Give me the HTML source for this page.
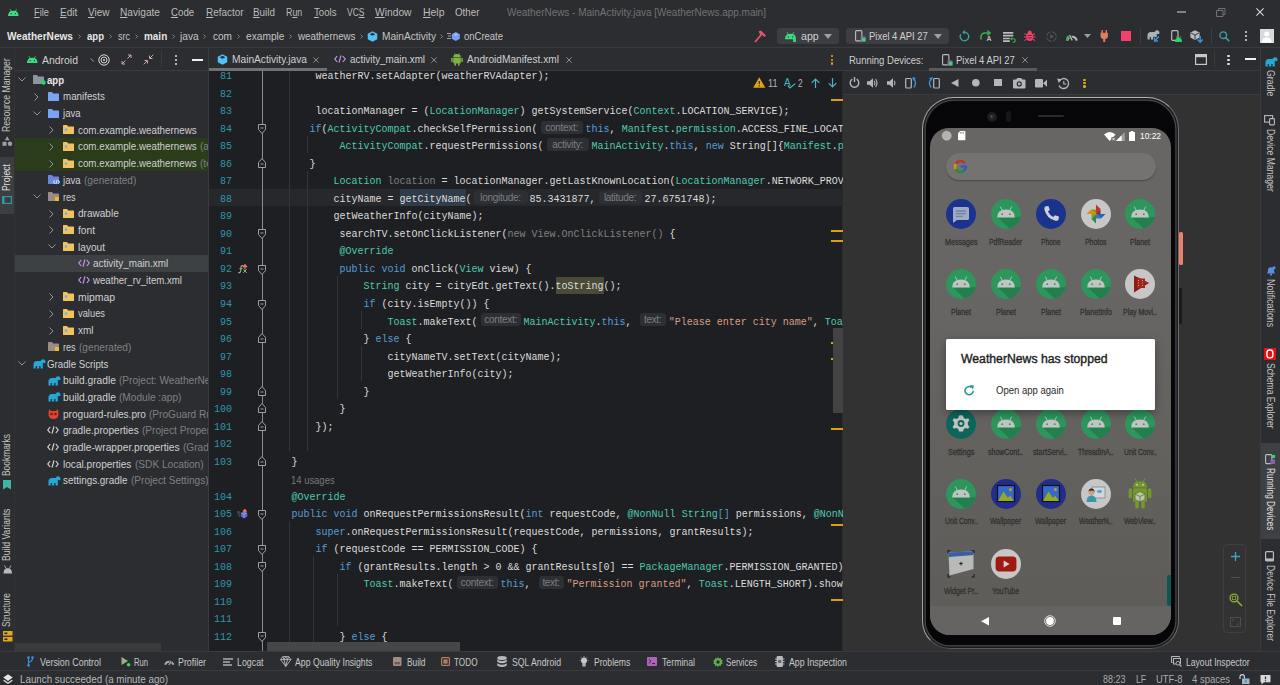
<!DOCTYPE html>
<html lang="en"><head><meta charset="utf-8"><title>WeatherNews - MainActivity.java</title>
<style>
html,body{margin:0;padding:0;background:#2b2d30;}
body{width:1280px;height:685px;overflow:hidden;font-family:"Liberation Sans",sans-serif;}
#root{position:relative;width:1280px;height:685px;overflow:hidden;background:#2b2d30;}
.t{position:absolute;height:16px;line-height:16px;white-space:nowrap;transform-origin:0 50%;}
.vt{position:absolute;white-space:nowrap;font-size:10px;line-height:14px;height:14px;color:#bbb;transform-origin:0 0;}
.cl{position:absolute;left:267.5px;height:17.5px;line-height:17.5px;white-space:pre;font-family:"Liberation Mono",monospace;font-size:10px;color:#dcdcdc;}
.ln{position:absolute;left:209px;width:23px;text-align:right;height:17.5px;line-height:17.5px;font-family:"Liberation Mono",monospace;font-size:10px;color:#2b97ac;}
.k{color:#569cd6}.c{color:#4ec9b0}.s{color:#d69d85}.g{color:#808080}.a{color:#4ec9b0}
.h{display:inline-block;vertical-align:top;margin-top:-0.1px;height:13px;line-height:13.4px;background:#2d2f33;border-radius:3px;color:#7a7e85;font-family:"Liberation Sans",sans-serif;font-size:10px;text-align:center;overflow:hidden;letter-spacing:-0.3px}
svg{position:absolute;overflow:visible}

</style></head>
<body>
<div id="root">
<div style="position:absolute;left:0px;top:0px;width:1280px;height:48px;background:#2b2d30;"></div>
<div style="position:absolute;left:0px;top:47px;width:1280px;height:1px;background:#393b40;"></div>
<div style="position:absolute;left:0px;top:48px;width:15px;height:603px;background:#2b2d30;"></div>
<div style="position:absolute;left:14px;top:48px;width:1px;height:603px;background:#313336;"></div>
<div style="position:absolute;left:15px;top:48px;width:194px;height:603px;background:#2b2d30;"></div>
<div style="position:absolute;left:15px;top:70px;width:193px;height:1px;background:#393b40;"></div>
<div style="position:absolute;left:208px;top:48px;width:1px;height:603px;background:#393b40;"></div>
<div style="position:absolute;left:209px;top:48px;width:634px;height:23px;background:#2b2d30;"></div>
<div style="position:absolute;left:209px;top:70px;width:634px;height:1px;background:#393b40;"></div>
<div style="position:absolute;left:209px;top:71px;width:633.2px;height:580px;background:#1e1f22;"></div>
<div style="position:absolute;left:842.2px;top:48px;width:418px;height:603px;background:#2b2d30;"></div>
<div style="position:absolute;left:843.3px;top:95px;width:417px;height:556px;background:#323232;"></div>
<div style="position:absolute;left:843.3px;top:94px;width:417px;height:1px;background:#393b40;"></div>
<div style="position:absolute;left:843.3px;top:70px;width:417px;height:1px;background:#393b40;"></div>
<div style="position:absolute;left:1260px;top:48px;width:20px;height:603px;background:#2b2d30;"></div>
<div style="position:absolute;left:1260px;top:48px;width:1px;height:603px;background:#393b40;"></div>
<div style="position:absolute;left:0px;top:651px;width:1280px;height:34px;background:#2b2d30;"></div>
<div style="position:absolute;left:0px;top:651px;width:1280px;height:1px;background:#393b40;"></div>
<div style="position:absolute;left:0px;top:670px;width:1280px;height:1px;background:#393b40;"></div>
<div style="position:absolute;left:209px;top:71px;width:634px;height:580px;overflow:hidden">
<div style="position:absolute;left:-209px;top:-71px;width:1280px;height:685px">
<div style="position:absolute;left:209px;top:188.5px;width:634px;height:17.3px;background:#26282c;"></div>
<div style="position:absolute;left:399.5px;top:188.5px;width:66px;height:17.3px;background:#303c49;"></div>
<div style="position:absolute;left:555.5px;top:276.6px;width:48.5px;height:17.3px;background:#4a4a36;"></div>
<div style="position:absolute;left:261.5px;top:71px;width:1px;height:580px;background:#8c8c8c;"></div>
<div class="ln" style="top:68.25px">81</div>
<div class="cl" style="top:68.25px">        weatherRV.setAdapter(weatherRVAdapter);</div>
<div class="ln" style="top:85.77px">82</div>
<div class="cl" style="top:85.77px"></div>
<div class="ln" style="top:103.29px">83</div>
<div class="cl" style="top:103.29px">        locationManager = (<span class="c">LocationManager</span>) getSystemService(<span class="c">Context</span>.LOCATION_SERVICE);</div>
<div class="ln" style="top:120.81px">84</div>
<div class="cl" style="top:120.81px">       <span class="k">if</span>(<span class="c">ActivityCompat</span>.checkSelfPermission(<span style="display:inline-block;width:3px"></span><span class="h" style="width:42px">context:</span><span style="display:inline-block;width:3px"></span><span class="k">this</span>, <span class="c">Manifest</span>.<span class="c">permission</span>.ACCESS_FINE_LOCATION) != PackageManager</div>
<div class="ln" style="top:138.33px">85</div>
<div class="cl" style="top:138.33px">            <span class="c">ActivityCompat</span>.requestPermissions(<span style="display:inline-block;width:3px"></span><span class="h" style="width:42px">activity:</span><span style="display:inline-block;width:3px"></span><span class="c">MainActivity</span>.<span class="k">this</span>, <span class="k">new</span> String[]{<span class="c">Manifest</span>.<span class="c">permission</span>.ACCESS_FINE</div>
<div class="ln" style="top:155.85px">86</div>
<div class="cl" style="top:155.85px">       }</div>
<div class="ln" style="top:173.37px">87</div>
<div class="cl" style="top:173.37px">           <span class="c">Location</span> <span class="g">location</span> = locationManager.getLastKnownLocation(<span class="c">LocationManager</span>.NETWORK_PROVIDER);</div>
<div class="ln" style="top:190.89px">88</div>
<div class="cl" style="top:190.89px">           cityName = getCityName(<span style="display:inline-block;width:2px"></span><span class="h" style="width:54px">longitude:</span><span style="display:inline-block;width:2px"></span>85.3431877,<span style="display:inline-block;width:3px"></span><span class="h" style="width:43px">latitude:</span><span style="display:inline-block;width:3px"></span>27.6751748);</div>
<div class="ln" style="top:208.41px">89</div>
<div class="cl" style="top:208.41px">           getWeatherInfo(cityName);</div>
<div class="ln" style="top:225.93px">90</div>
<div class="cl" style="top:225.93px">            searchTV.setOnClickListener(<span class="g">new View.OnClickListener()</span> {</div>
<div class="ln" style="top:243.45px">91</div>
<div class="cl" style="top:243.45px">            <span class="c">@Override</span></div>
<div class="ln" style="top:260.97px">92</div>
<div class="cl" style="top:260.97px">            <span class="k">public void</span> onClick(<span class="c">View</span> view) {</div>
<div class="ln" style="top:278.49px">93</div>
<div class="cl" style="top:278.49px">                <span class="c">String</span> city = cityEdt.getText().toString();</div>
<div class="ln" style="top:296.01px">94</div>
<div class="cl" style="top:296.01px">                <span class="k">if</span> (city.isEmpty()) {</div>
<div class="ln" style="top:313.53px">95</div>
<div class="cl" style="top:313.53px">                    <span class="c">Toast</span>.makeText(<span style="display:inline-block;width:3px"></span><span class="h" style="width:40px">context:</span><span style="display:inline-block;width:3px"></span><span class="c">MainActivity</span>.<span class="k">this</span>, <span style="display:inline-block;width:2px"></span><span class="h" style="width:26px">text:</span><span style="display:inline-block;width:3px"></span><span class="s">"Please enter city name"</span>, <span class="c">Toast</span>.LENGTH_SHORT).show();</div>
<div class="ln" style="top:331.05px">96</div>
<div class="cl" style="top:331.05px">                } <span class="k">else</span> {</div>
<div class="ln" style="top:348.57px">97</div>
<div class="cl" style="top:348.57px">                    cityNameTV.setText(cityName);</div>
<div class="ln" style="top:366.09px">98</div>
<div class="cl" style="top:366.09px">                    getWeatherInfo(city);</div>
<div class="ln" style="top:383.61px">99</div>
<div class="cl" style="top:383.61px">                }</div>
<div class="ln" style="top:401.13px">100</div>
<div class="cl" style="top:401.13px">            }</div>
<div class="ln" style="top:418.65px">101</div>
<div class="cl" style="top:418.65px">        });</div>
<div class="ln" style="top:436.17px">102</div>
<div class="cl" style="top:436.17px"></div>
<div class="ln" style="top:453.69px">103</div>
<div class="cl" style="top:453.69px">    }</div>
<div class="t" style="left:291px;top:472.01px;font-size:10.5px;color:#787878;transform:scaleX(.9)">14 usages</div>
<div class="ln" style="top:488.73px">104</div>
<div class="cl" style="top:488.73px">    <span class="c">@Override</span></div>
<div class="ln" style="top:506.25px">105</div>
<div class="cl" style="top:506.25px">    <span class="k">public void</span> onRequestPermissionsResult(<span class="k">int</span> requestCode, <span class="c">@NonNull</span> <span class="c">String</span><span class="k">[]</span> permissions, <span class="c">@NonNull</span> <span class="k">int[]</span> grantResults) {</div>
<div class="ln" style="top:523.77px">106</div>
<div class="cl" style="top:523.77px">        <span class="k">super</span>.onRequestPermissionsResult(requestCode, permissions, grantResults);</div>
<div class="ln" style="top:541.29px">107</div>
<div class="cl" style="top:541.29px">        <span class="k">if</span> (requestCode == PERMISSION_CODE) {</div>
<div class="ln" style="top:558.81px">108</div>
<div class="cl" style="top:558.81px">            <span class="k">if</span> (grantResults.length &gt; 0 &amp;&amp; grantResults[0] == <span class="c">PackageManager</span>.PERMISSION_GRANTED) {</div>
<div class="ln" style="top:576.33px">109</div>
<div class="cl" style="top:576.33px">                <span class="c">Toast</span>.makeText(<span style="display:inline-block;width:3px"></span><span class="h" style="width:41px">context:</span><span style="display:inline-block;width:3px"></span><span class="k">this</span>, <span style="display:inline-block;width:2px"></span><span class="h" style="width:25px">text:</span><span style="display:inline-block;width:3px"></span><span class="s">"Permission granted"</span>, <span class="c">Toast</span>.LENGTH_SHORT).show();</div>
<div class="ln" style="top:593.85px">110</div>
<div class="cl" style="top:593.85px"></div>
<div class="ln" style="top:611.37px">111</div>
<div class="cl" style="top:611.37px"></div>
<div class="ln" style="top:628.89px">112</div>
<div class="cl" style="top:628.89px">            } <span class="k">else</span> {</div>
<div style="position:absolute;left:289px;top:65.8px;width:1px;height:385.4px;background:#33353a;"></div>
<div style="position:absolute;left:289px;top:521.4px;width:1px;height:140.2px;background:#33353a;"></div>
<div style="position:absolute;left:307px;top:135.9px;width:1px;height:17.5px;background:#33353a;"></div>
<div style="position:absolute;left:307px;top:171.0px;width:1px;height:280.3px;background:#33353a;"></div>
<div style="position:absolute;left:337px;top:276.1px;width:1px;height:122.6px;background:#33353a;"></div>
<div style="position:absolute;left:361.2px;top:311.1px;width:1px;height:17.5px;background:#33353a;"></div>
<div style="position:absolute;left:361.2px;top:346.2px;width:1px;height:35.0px;background:#33353a;"></div>
<div style="position:absolute;left:313px;top:556.4px;width:1px;height:105.1px;background:#33353a;"></div>
<div style="position:absolute;left:337px;top:573.9px;width:1px;height:52.6px;background:#33353a;"></div>
<svg style="left:258px;top:124.3px" width="8" height="10" viewBox="0 0 8 10"><path d="M0.5 0.5H7.5V5.5L4 9.5L0.5 5.5Z" fill="#1e1f22" stroke="#a0a0a0" stroke-width="1"/><path d="M2.5 4H5.5" stroke="#a0a0a0" stroke-width="1"/></svg>
<svg style="left:258px;top:157.8px" width="8" height="10" viewBox="0 0 8 10"><path d="M0.5 9.5H7.5V4.5L4 0.5L0.5 4.5Z" fill="#1e1f22" stroke="#a0a0a0" stroke-width="1"/><path d="M2.5 6H5.5" stroke="#a0a0a0" stroke-width="1"/></svg>
<svg style="left:258px;top:229.4px" width="8" height="10" viewBox="0 0 8 10"><path d="M0.5 0.5H7.5V5.5L4 9.5L0.5 5.5Z" fill="#1e1f22" stroke="#a0a0a0" stroke-width="1"/><path d="M2.5 4H5.5" stroke="#a0a0a0" stroke-width="1"/></svg>
<svg style="left:258px;top:264.5px" width="8" height="10" viewBox="0 0 8 10"><path d="M0.5 0.5H7.5V5.5L4 9.5L0.5 5.5Z" fill="#1e1f22" stroke="#a0a0a0" stroke-width="1"/><path d="M2.5 4H5.5" stroke="#a0a0a0" stroke-width="1"/></svg>
<svg style="left:258px;top:299.5px" width="8" height="10" viewBox="0 0 8 10"><path d="M0.5 0.5H7.5V5.5L4 9.5L0.5 5.5Z" fill="#1e1f22" stroke="#a0a0a0" stroke-width="1"/><path d="M2.5 4H5.5" stroke="#a0a0a0" stroke-width="1"/></svg>
<svg style="left:258px;top:333.0px" width="8" height="10" viewBox="0 0 8 10"><path d="M0.5 9.5H7.5V4.5L4 0.5L0.5 4.5Z" fill="#1e1f22" stroke="#a0a0a0" stroke-width="1"/><path d="M2.5 6H5.5" stroke="#a0a0a0" stroke-width="1"/></svg>
<svg style="left:258px;top:385.5px" width="8" height="10" viewBox="0 0 8 10"><path d="M0.5 9.5H7.5V4.5L4 0.5L0.5 4.5Z" fill="#1e1f22" stroke="#a0a0a0" stroke-width="1"/><path d="M2.5 6H5.5" stroke="#a0a0a0" stroke-width="1"/></svg>
<svg style="left:258px;top:403.0px" width="8" height="10" viewBox="0 0 8 10"><path d="M0.5 9.5H7.5V4.5L4 0.5L0.5 4.5Z" fill="#1e1f22" stroke="#a0a0a0" stroke-width="1"/><path d="M2.5 6H5.5" stroke="#a0a0a0" stroke-width="1"/></svg>
<svg style="left:258px;top:420.6px" width="8" height="10" viewBox="0 0 8 10"><path d="M0.5 9.5H7.5V4.5L4 0.5L0.5 4.5Z" fill="#1e1f22" stroke="#a0a0a0" stroke-width="1"/><path d="M2.5 6H5.5" stroke="#a0a0a0" stroke-width="1"/></svg>
<svg style="left:258px;top:455.6px" width="8" height="10" viewBox="0 0 8 10"><path d="M0.5 9.5H7.5V4.5L4 0.5L0.5 4.5Z" fill="#1e1f22" stroke="#a0a0a0" stroke-width="1"/><path d="M2.5 6H5.5" stroke="#a0a0a0" stroke-width="1"/></svg>
<svg style="left:258px;top:509.7px" width="8" height="10" viewBox="0 0 8 10"><path d="M0.5 0.5H7.5V5.5L4 9.5L0.5 5.5Z" fill="#1e1f22" stroke="#a0a0a0" stroke-width="1"/><path d="M2.5 4H5.5" stroke="#a0a0a0" stroke-width="1"/></svg>
<svg style="left:258px;top:544.8px" width="8" height="10" viewBox="0 0 8 10"><path d="M0.5 0.5H7.5V5.5L4 9.5L0.5 5.5Z" fill="#1e1f22" stroke="#a0a0a0" stroke-width="1"/><path d="M2.5 4H5.5" stroke="#a0a0a0" stroke-width="1"/></svg>
<svg style="left:258px;top:562.3px" width="8" height="10" viewBox="0 0 8 10"><path d="M0.5 0.5H7.5V5.5L4 9.5L0.5 5.5Z" fill="#1e1f22" stroke="#a0a0a0" stroke-width="1"/><path d="M2.5 4H5.5" stroke="#a0a0a0" stroke-width="1"/></svg>
<svg style="left:258px;top:632.4px" width="8" height="10" viewBox="0 0 8 10"><path d="M0.5 0.5H7.5V5.5L4 9.5L0.5 5.5Z" fill="#1e1f22" stroke="#a0a0a0" stroke-width="1"/><path d="M2.5 4H5.5" stroke="#a0a0a0" stroke-width="1"/></svg>
<svg style="left:238px;top:264.1px" width="10" height="10" viewBox="0 0 10 10"><path d="M0.3 8.6Q2.6 9 2.8 6.5L3 3.2Q3.2 1.2 5 1.5" fill="none" stroke="#8fb88a" stroke-width="1.1"/><path d="M1.4 4.6H4.4" stroke="#8fb88a" stroke-width="1"/><path d="M5.2 8.8L8.6 5.4M5.4 5.6L8.6 8.8" stroke="#7fc878" stroke-width="1"/><path d="M6.9 5.6V1.2M4.8 3.2L6.9 0.8L9 3.2" fill="none" stroke="#ee7a68" stroke-width="1.3"/></svg>
<svg style="left:237px;top:509.1px" width="11" height="10" viewBox="0 0 11 10"><path d="M0 3H2.8M0.8 5H2.8M1.6 7H2.8" stroke="#5a7a9a" stroke-width=".9"/><path d="M7 2.2L10.3 4V7.6L7 9.4L3.8 7.6V4Z" fill="#5a66dc"/><path d="M7 5.2L9.6 4M7 5.2L4.4 4M7 5.2V8.6" stroke="#7fb0d8" stroke-width=".8"/><path d="M7.8 5V1M6 2.6L7.8 0.6L9.6 2.6" fill="none" stroke="#ee7a68" stroke-width="1.3"/></svg>
<div style="position:absolute;left:267px;top:642px;width:192.5px;height:9px;background:#454749;"></div>
<div style="position:absolute;left:831px;top:99px;width:12px;height:2px;background:#d9a016;"></div>
<div style="position:absolute;left:831px;top:230px;width:12px;height:2px;background:#d9a016;"></div>
<div style="position:absolute;left:831px;top:239.5px;width:12px;height:2px;background:#d9a016;"></div>
<div style="position:absolute;left:831px;top:428.4px;width:12px;height:2px;background:#d9a016;"></div>
<div style="position:absolute;left:831px;top:523.5px;width:12px;height:2px;background:#d9a016;"></div>
<div style="position:absolute;left:831px;top:599.4px;width:12px;height:2px;background:#d9a016;"></div>
<div style="position:absolute;left:830.7px;top:342px;width:3px;height:2px;background:#d9a016;"></div>
<div style="position:absolute;left:830.7px;top:358px;width:3px;height:2px;background:#d9a016;"></div>
<div style="position:absolute;left:833.3px;top:328.4px;width:9.7px;height:84.2px;background:#434343;"></div>
</div></div>
<div style="position:absolute;left:15px;top:71px;width:193px;height:580px;overflow:hidden">
<div style="position:absolute;left:-15px;top:-71px;width:1280px;height:685px">
<div style="position:absolute;left:15px;top:138.0px;width:193px;height:33.4px;background:#2a3c1a;"></div>
<div style="position:absolute;left:15px;top:254.9px;width:193px;height:16.7px;background:#3e4144;"></div>
<svg style="left:17.5px;top:77.1px" width="8" height="5" viewBox="0 0 8 5"><path d="M0.5 0.5L4 4L7.5 0.5" fill="none" stroke="#9da0a3" stroke-width="0.9"/></svg>
<svg style="left:33px;top:75.1px" width="11" height="9" viewBox="0 0 11 9"><path d="M0 0.6Q0 0 .6 0H4L5.2 1.4H10.4Q11 1.4 11 2V8.4Q11 9 10.4 9H.6Q0 9 0 8.4Z" fill="#8a979f"/></svg>
<svg style="left:40.5px;top:80.1px" width="5" height="5"><circle cx="2.5" cy="2.5" r="2.3" fill="#2fd16a"/></svg>
<div class="t" style="left:47.4px;top:71.6px;font-size:11px;color:#e8e8e8;font-weight:bold;transform:scaleX(0.869);">app</div>
<svg style="left:34px;top:92.8px" width="5" height="8" viewBox="0 0 5 8"><path d="M0.5 0.5L4 4L0.5 7.5" fill="none" stroke="#9da0a3" stroke-width="0.9"/></svg>
<svg style="left:48px;top:91.8px" width="11" height="9" viewBox="0 0 11 9"><path d="M0 0.6Q0 0 .6 0H4L5.2 1.4H10.4Q11 1.4 11 2V8.4Q11 9 10.4 9H.6Q0 9 0 8.4Z" fill="#7aa2f7"/></svg>
<div class="t" style="left:62.9px;top:88.3px;font-size:11px;color:#d0d0d0;transform:scaleX(0.888);">manifests</div>
<svg style="left:32.5px;top:110.5px" width="8" height="5" viewBox="0 0 8 5"><path d="M0.5 0.5L4 4L7.5 0.5" fill="none" stroke="#9da0a3" stroke-width="0.9"/></svg>
<svg style="left:48px;top:108.5px" width="11" height="9" viewBox="0 0 11 9"><path d="M0 0.6Q0 0 .6 0H4L5.2 1.4H10.4Q11 1.4 11 2V8.4Q11 9 10.4 9H.6Q0 9 0 8.4Z" fill="#7aa2f7"/></svg>
<div class="t" style="left:62.9px;top:105.0px;font-size:11px;color:#d0d0d0;transform:scaleX(0.872);">java</div>
<svg style="left:49px;top:126.2px" width="5" height="8" viewBox="0 0 5 8"><path d="M0.5 0.5L4 4L0.5 7.5" fill="none" stroke="#9da0a3" stroke-width="0.9"/></svg>
<svg style="left:63.3px;top:125.2px" width="11" height="9" viewBox="0 0 11 9"><path d="M0 0.6Q0 0 .6 0H4L5.2 1.4H10.4Q11 1.4 11 2V8.4Q11 9 10.4 9H.6Q0 9 0 8.4Z" fill="#f2c25f"/><circle cx="3" cy="4.6" r="1.3" fill="#5fb4e8"/></svg>
<div class="t" style="left:77.8px;top:121.7px;font-size:11px;color:#d0d0d0;transform:scaleX(0.890);">com.example.weathernews</div>
<svg style="left:49px;top:142.9px" width="5" height="8" viewBox="0 0 5 8"><path d="M0.5 0.5L4 4L0.5 7.5" fill="none" stroke="#9da0a3" stroke-width="0.9"/></svg>
<svg style="left:63.3px;top:141.9px" width="11" height="9" viewBox="0 0 11 9"><path d="M0 0.6Q0 0 .6 0H4L5.2 1.4H10.4Q11 1.4 11 2V8.4Q11 9 10.4 9H.6Q0 9 0 8.4Z" fill="#f2c25f"/><circle cx="3" cy="4.6" r="1.3" fill="#5fb4e8"/></svg>
<div class="t" style="left:77.8px;top:138.4px;font-size:11px;color:#d0d0d0;transform:scaleX(0.890);">com.example.weathernews</div>
<div class="t" style="left:199.59999999999997px;top:138.4px;font-size:11px;color:#7f8183;transform:scaleX(0.920);">(androidTest)</div>
<svg style="left:49px;top:159.6px" width="5" height="8" viewBox="0 0 5 8"><path d="M0.5 0.5L4 4L0.5 7.5" fill="none" stroke="#9da0a3" stroke-width="0.9"/></svg>
<svg style="left:63.3px;top:158.6px" width="11" height="9" viewBox="0 0 11 9"><path d="M0 0.6Q0 0 .6 0H4L5.2 1.4H10.4Q11 1.4 11 2V8.4Q11 9 10.4 9H.6Q0 9 0 8.4Z" fill="#f2c25f"/><circle cx="3" cy="4.6" r="1.3" fill="#5fb4e8"/></svg>
<div class="t" style="left:77.8px;top:155.1px;font-size:11px;color:#d0d0d0;transform:scaleX(0.890);">com.example.weathernews</div>
<div class="t" style="left:199.59999999999997px;top:155.1px;font-size:11px;color:#7f8183;transform:scaleX(0.920);">(test)</div>
<svg style="left:48px;top:175.3px" width="11" height="9" viewBox="0 0 11 9"><path d="M0 0.6Q0 0 .6 0H4L5.2 1.4H10.4Q11 1.4 11 2V8.4Q11 9 10.4 9H.6Q0 9 0 8.4Z" fill="#6f86d8"/></svg>
<svg style="left:53px;top:178.8px" width="7" height="6" viewBox="0 0 12 8"><path d="M3.2 1L0.8 4L3.2 7M8.8 1L11.2 4L8.8 7M7 0.3L5 7.7" fill="none" stroke="#b8e0ff" stroke-width="1.9"/></svg>
<div class="t" style="left:62.9px;top:171.8px;font-size:11px;color:#d0d0d0;transform:scaleX(0.872);">java</div>
<div class="t" style="left:83.7px;top:171.8px;font-size:11px;color:#7f8183;transform:scaleX(0.920);">(generated)</div>
<svg style="left:32.5px;top:194.0px" width="8" height="5" viewBox="0 0 8 5"><path d="M0.5 0.5L4 4L7.5 0.5" fill="none" stroke="#9da0a3" stroke-width="0.9"/></svg>
<svg style="left:48px;top:192.0px" width="11" height="9" viewBox="0 0 11 9"><path d="M0 0.6Q0 0 .6 0H4L5.2 1.4H10.4Q11 1.4 11 2V8.4Q11 9 10.4 9H.6Q0 9 0 8.4Z" fill="#9a8c82"/></svg>
<div style="position:absolute;left:55px;top:197.0px;width:4px;height:4px;background:#f2b632;"></div>
<div class="t" style="left:62.9px;top:188.5px;font-size:11px;color:#d0d0d0;transform:scaleX(0.825);">res</div>
<svg style="left:49px;top:209.7px" width="5" height="8" viewBox="0 0 5 8"><path d="M0.5 0.5L4 4L0.5 7.5" fill="none" stroke="#9da0a3" stroke-width="0.9"/></svg>
<svg style="left:63.3px;top:208.7px" width="11" height="9" viewBox="0 0 11 9"><path d="M0 0.6Q0 0 .6 0H4L5.2 1.4H10.4Q11 1.4 11 2V8.4Q11 9 10.4 9H.6Q0 9 0 8.4Z" fill="#f2c25f"/><circle cx="3" cy="4.6" r="1.3" fill="#5fb4e8"/></svg>
<div class="t" style="left:77.8px;top:205.2px;font-size:11px;color:#d0d0d0;transform:scaleX(0.912);">drawable</div>
<svg style="left:49px;top:226.4px" width="5" height="8" viewBox="0 0 5 8"><path d="M0.5 0.5L4 4L0.5 7.5" fill="none" stroke="#9da0a3" stroke-width="0.9"/></svg>
<svg style="left:63.3px;top:225.4px" width="11" height="9" viewBox="0 0 11 9"><path d="M0 0.6Q0 0 .6 0H4L5.2 1.4H10.4Q11 1.4 11 2V8.4Q11 9 10.4 9H.6Q0 9 0 8.4Z" fill="#f2c25f"/><circle cx="3" cy="4.6" r="1.3" fill="#5fb4e8"/></svg>
<div class="t" style="left:77.8px;top:221.9px;font-size:11px;color:#d0d0d0;transform:scaleX(0.937);">font</div>
<svg style="left:47.5px;top:244.1px" width="8" height="5" viewBox="0 0 8 5"><path d="M0.5 0.5L4 4L7.5 0.5" fill="none" stroke="#9da0a3" stroke-width="0.9"/></svg>
<svg style="left:63.3px;top:242.1px" width="11" height="9" viewBox="0 0 11 9"><path d="M0 0.6Q0 0 .6 0H4L5.2 1.4H10.4Q11 1.4 11 2V8.4Q11 9 10.4 9H.6Q0 9 0 8.4Z" fill="#f2c25f"/><circle cx="3" cy="4.6" r="1.3" fill="#5fb4e8"/></svg>
<div class="t" style="left:77.8px;top:238.6px;font-size:11px;color:#d0d0d0;transform:scaleX(0.920);">layout</div>
<svg style="left:77.5px;top:259.3px" width="12" height="8" viewBox="0 0 12 8"><path d="M3.2 1L0.8 4L3.2 7M8.8 1L11.2 4L8.8 7M7 0.3L5 7.7" fill="none" stroke="#c792ea" stroke-width="1.2"/></svg>
<div class="t" style="left:93px;top:255.3px;font-size:11px;color:#d0d0d0;transform:scaleX(0.898);">activity_main.xml</div>
<svg style="left:77.5px;top:276.0px" width="12" height="8" viewBox="0 0 12 8"><path d="M3.2 1L0.8 4L3.2 7M8.8 1L11.2 4L8.8 7M7 0.3L5 7.7" fill="none" stroke="#c792ea" stroke-width="1.2"/></svg>
<div class="t" style="left:93px;top:272.0px;font-size:11px;color:#d0d0d0;transform:scaleX(0.877);">weather_rv_item.xml</div>
<svg style="left:49px;top:293.2px" width="5" height="8" viewBox="0 0 5 8"><path d="M0.5 0.5L4 4L0.5 7.5" fill="none" stroke="#9da0a3" stroke-width="0.9"/></svg>
<svg style="left:63.3px;top:292.2px" width="11" height="9" viewBox="0 0 11 9"><path d="M0 0.6Q0 0 .6 0H4L5.2 1.4H10.4Q11 1.4 11 2V8.4Q11 9 10.4 9H.6Q0 9 0 8.4Z" fill="#f2c25f"/><circle cx="3" cy="4.6" r="1.3" fill="#5fb4e8"/></svg>
<div class="t" style="left:77.8px;top:288.7px;font-size:11px;color:#d0d0d0;transform:scaleX(0.946);">mipmap</div>
<svg style="left:49px;top:309.9px" width="5" height="8" viewBox="0 0 5 8"><path d="M0.5 0.5L4 4L0.5 7.5" fill="none" stroke="#9da0a3" stroke-width="0.9"/></svg>
<svg style="left:63.3px;top:308.9px" width="11" height="9" viewBox="0 0 11 9"><path d="M0 0.6Q0 0 .6 0H4L5.2 1.4H10.4Q11 1.4 11 2V8.4Q11 9 10.4 9H.6Q0 9 0 8.4Z" fill="#f2c25f"/><circle cx="3" cy="4.6" r="1.3" fill="#5fb4e8"/></svg>
<div class="t" style="left:77.8px;top:305.4px;font-size:11px;color:#d0d0d0;transform:scaleX(0.849);">values</div>
<svg style="left:49px;top:326.6px" width="5" height="8" viewBox="0 0 5 8"><path d="M0.5 0.5L4 4L0.5 7.5" fill="none" stroke="#9da0a3" stroke-width="0.9"/></svg>
<svg style="left:63.3px;top:325.6px" width="11" height="9" viewBox="0 0 11 9"><path d="M0 0.6Q0 0 .6 0H4L5.2 1.4H10.4Q11 1.4 11 2V8.4Q11 9 10.4 9H.6Q0 9 0 8.4Z" fill="#f2c25f"/><circle cx="3" cy="4.6" r="1.3" fill="#5fb4e8"/></svg>
<div class="t" style="left:77.8px;top:322.1px;font-size:11px;color:#d0d0d0;transform:scaleX(0.912);">xml</div>
<svg style="left:48px;top:342.3px" width="11" height="9" viewBox="0 0 11 9"><path d="M0 0.6Q0 0 .6 0H4L5.2 1.4H10.4Q11 1.4 11 2V8.4Q11 9 10.4 9H.6Q0 9 0 8.4Z" fill="#9a8c82"/></svg>
<div style="position:absolute;left:55px;top:347.3px;width:4px;height:4px;background:#f2b632;"></div>
<div class="t" style="left:62.9px;top:338.8px;font-size:11px;color:#d0d0d0;transform:scaleX(0.825);">res</div>
<div class="t" style="left:78.7px;top:338.8px;font-size:11px;color:#7f8183;transform:scaleX(0.920);">(generated)</div>
<svg style="left:17.5px;top:361.0px" width="8" height="5" viewBox="0 0 8 5"><path d="M0.5 0.5L4 4L7.5 0.5" fill="none" stroke="#9da0a3" stroke-width="0.9"/></svg>
<svg style="left:33px;top:359.0px" width="13" height="10" viewBox="0 0 13 10"><path d="M0.5 9.5V5.5Q0.5 2 4 2H7.5Q8.5 0 10.5 0.3Q12.8 0.8 12.5 3.2Q12.3 4.2 11 4.2Q10.3 4.2 10 3.6Q9.6 4.5 9.8 5.5V9.5H7.6V7H6.2V9.5H3.9V7H2.7V9.5Z" fill="#24a8d8"/></svg>
<div class="t" style="left:47.4px;top:355.5px;font-size:11px;color:#d0d0d0;transform:scaleX(0.881);">Gradle Scripts</div>
<svg style="left:48px;top:375.7px" width="13" height="10" viewBox="0 0 13 10"><path d="M0.5 9.5V5.5Q0.5 2 4 2H7.5Q8.5 0 10.5 0.3Q12.8 0.8 12.5 3.2Q12.3 4.2 11 4.2Q10.3 4.2 10 3.6Q9.6 4.5 9.8 5.5V9.5H7.6V7H6.2V9.5H3.9V7H2.7V9.5Z" fill="#24a8d8"/></svg>
<div class="t" style="left:62.9px;top:372.2px;font-size:11px;color:#d0d0d0;transform:scaleX(0.932);">build.gradle</div>
<div class="t" style="left:119.10000000000001px;top:372.2px;font-size:11px;color:#7f8183;transform:scaleX(0.920);">(Project: WeatherNews)</div>
<svg style="left:48px;top:392.4px" width="13" height="10" viewBox="0 0 13 10"><path d="M0.5 9.5V5.5Q0.5 2 4 2H7.5Q8.5 0 10.5 0.3Q12.8 0.8 12.5 3.2Q12.3 4.2 11 4.2Q10.3 4.2 10 3.6Q9.6 4.5 9.8 5.5V9.5H7.6V7H6.2V9.5H3.9V7H2.7V9.5Z" fill="#24a8d8"/></svg>
<div class="t" style="left:62.9px;top:388.9px;font-size:11px;color:#d0d0d0;transform:scaleX(0.932);">build.gradle</div>
<div class="t" style="left:119.10000000000001px;top:388.9px;font-size:11px;color:#7f8183;transform:scaleX(0.920);">(Module :app)</div>
<svg style="left:48px;top:408.6px" width="11" height="10" viewBox="0 0 11 10"><path d="M1 0L3 2H8L10 0L10.5 5Q10.5 10 5.5 10Q.5 10 .5 5Z" fill="#e0452f"/><circle cx="3.6" cy="5" r="1.3" fill="#7a1a10"/><circle cx="7.4" cy="5" r="1.3" fill="#7a1a10"/></svg>
<div class="t" style="left:62.9px;top:405.6px;font-size:11px;color:#d0d0d0;transform:scaleX(0.917);">proguard-rules.pro</div>
<div class="t" style="left:149.1px;top:405.6px;font-size:11px;color:#7f8183;transform:scaleX(0.920);">(ProGuard Rules for &quot;:app&quot;)</div>
<svg style="left:47px;top:426.3px" width="12" height="8" viewBox="0 0 12 8"><path d="M3.2 1L0.8 4L3.2 7M8.8 1L11.2 4L8.8 7M7 0.3L5 7.7" fill="none" stroke="#d5d5d5" stroke-width="1.2"/></svg>
<div class="t" style="left:62.9px;top:422.3px;font-size:11px;color:#d0d0d0;transform:scaleX(0.917);">gradle.properties</div>
<div class="t" style="left:141.79999999999998px;top:422.3px;font-size:11px;color:#7f8183;transform:scaleX(0.920);">(Project Properties)</div>
<svg style="left:47px;top:443.0px" width="12" height="8" viewBox="0 0 12 8"><path d="M3.2 1L0.8 4L3.2 7M8.8 1L11.2 4L8.8 7M7 0.3L5 7.7" fill="none" stroke="#d5d5d5" stroke-width="1.2"/></svg>
<div class="t" style="left:62.9px;top:439.0px;font-size:11px;color:#d0d0d0;transform:scaleX(0.930);">gradle-wrapper.properties</div>
<div class="t" style="left:182.7px;top:439.0px;font-size:11px;color:#7f8183;transform:scaleX(0.920);">(Gradle Version)</div>
<svg style="left:47px;top:459.7px" width="12" height="8" viewBox="0 0 12 8"><path d="M3.2 1L0.8 4L3.2 7M8.8 1L11.2 4L8.8 7M7 0.3L5 7.7" fill="none" stroke="#d5d5d5" stroke-width="1.2"/></svg>
<div class="t" style="left:62.9px;top:455.7px;font-size:11px;color:#d0d0d0;transform:scaleX(0.917);">local.properties</div>
<div class="t" style="left:134.5px;top:455.7px;font-size:11px;color:#7f8183;transform:scaleX(0.920);">(SDK Location)</div>
<svg style="left:48px;top:475.9px" width="13" height="10" viewBox="0 0 13 10"><path d="M0.5 9.5V5.5Q0.5 2 4 2H7.5Q8.5 0 10.5 0.3Q12.8 0.8 12.5 3.2Q12.3 4.2 11 4.2Q10.3 4.2 10 3.6Q9.6 4.5 9.8 5.5V9.5H7.6V7H6.2V9.5H3.9V7H2.7V9.5Z" fill="#24a8d8"/></svg>
<div class="t" style="left:62.9px;top:472.4px;font-size:11px;color:#d0d0d0;transform:scaleX(0.900);">settings.gradle</div>
<div class="t" style="left:130.5px;top:472.4px;font-size:11px;color:#7f8183;transform:scaleX(0.920);">(Project Settings)</div>
<div style="position:absolute;left:15px;top:643px;width:146px;height:8px;background:#3a3b3d;"></div>
</div></div>
<svg style="left:27px;top:55.8px" width="10.5" height="7" viewBox="0 0 12 8"><path d="M0 8Q0 2 6 2Q12 2 12 8Z" fill="#3ddc84"/><path d="M2.3 0.2L3.8 2.8M9.7 0.2L8.2 2.8" stroke="#3ddc84" stroke-width="0.9"/><circle cx="3.6" cy="5.4" r=".7" fill="#2b2d30"/><circle cx="8.4" cy="5.4" r=".7" fill="#2b2d30"/></svg>
<div class="t" style="left:42px;top:51.5px;font-size:11px;color:#d0d0d0;transform:scaleX(0.949);">Android</div>
<svg style="left:90px;top:58px" width="5" height="4" viewBox="0 0 5 4"><path d="M0.5 0.5L4 3.5" stroke="#9a9a9a" stroke-width="1"/></svg>
<svg style="left:98px;top:54px" width="12" height="12" viewBox="0 0 12 12"><circle cx="6" cy="6" r="5.2" fill="none" stroke="#d8d8d8" stroke-width="1"/><circle cx="6" cy="6" r="3" fill="none" stroke="#d8d8d8" stroke-width="1"/><circle cx="6" cy="6" r="1" fill="#d8d8d8"/></svg>
<svg style="left:121px;top:54px" width="11" height="11" viewBox="0 0 11 11"><path d="M6.5 4.5L10 1M7 1H10V4M4.5 6.5L1 10M1 7V10H4" fill="none" stroke="#c9a9a9" stroke-width="1"/></svg>
<svg style="left:143px;top:54px" width="11" height="11" viewBox="0 0 11 11"><path d="M10.3 .7L6.8 4.2M6.5 1.5V4.5H9.5M.7 10.3L4.2 6.8M1.5 6.5H4.5V9.5" fill="none" stroke="#c9a9a9" stroke-width="1"/></svg>
<div style="position:absolute;left:161px;top:51px;width:1px;height:16px;background:#3a3a3a;"></div>
<div style="position:absolute;left:175px;top:55px;width:2px;height:2px;background:#e0e0e0;border-radius:1px"></div>
<div style="position:absolute;left:175px;top:59px;width:2px;height:2px;background:#e0e0e0;border-radius:1px"></div>
<div style="position:absolute;left:175px;top:63px;width:2px;height:2px;background:#e0e0e0;border-radius:1px"></div>
<div style="position:absolute;left:192px;top:58.5px;width:11px;height:2px;background:#f0f0f0;"></div>
<svg style="left:8px;top:8.8px" width="10.6" height="7.0" viewBox="0 0 12 8"><path d="M0 8Q0 2 6 2Q12 2 12 8Z" fill="#3ddc84"/><path d="M2.3 0.2L3.8 2.8M9.7 0.2L8.2 2.8" stroke="#3ddc84" stroke-width="0.9"/><circle cx="3.6" cy="5.4" r=".7" fill="#2b2d30"/><circle cx="8.4" cy="5.4" r=".7" fill="#2b2d30"/></svg>
<div class="t" style="left:34.4px;top:4.4px;font-size:11px;color:#bcbcbc;transform:scaleX(0.846);"><u>F</u>ile</div>
<div class="t" style="left:60.3px;top:4.4px;font-size:11px;color:#bcbcbc;transform:scaleX(0.913);"><u>E</u>dit</div>
<div class="t" style="left:87.6px;top:4.4px;font-size:11px;color:#bcbcbc;transform:scaleX(0.909);"><u>V</u>iew</div>
<div class="t" style="left:120.3px;top:4.4px;font-size:11px;color:#bcbcbc;transform:scaleX(0.921);"><u>N</u>avigate</div>
<div class="t" style="left:170.9px;top:4.4px;font-size:11px;color:#bcbcbc;transform:scaleX(0.882);"><u>C</u>ode</div>
<div class="t" style="left:205.7px;top:4.4px;font-size:11px;color:#bcbcbc;transform:scaleX(0.902);"><u>R</u>efactor</div>
<div class="t" style="left:253.2px;top:4.4px;font-size:11px;color:#bcbcbc;transform:scaleX(0.899);"><u>B</u>uild</div>
<div class="t" style="left:286.3px;top:4.4px;font-size:11px;color:#bcbcbc;transform:scaleX(0.803);">R<u>u</u>n</div>
<div class="t" style="left:313.5px;top:4.4px;font-size:11px;color:#bcbcbc;transform:scaleX(0.876);"><u>T</u>ools</div>
<div class="t" style="left:347px;top:4.4px;font-size:11px;color:#bcbcbc;transform:scaleX(0.774);">VC<u>S</u></div>
<div class="t" style="left:375px;top:4.4px;font-size:11px;color:#bcbcbc;transform:scaleX(0.933);"><u>W</u>indow</div>
<div class="t" style="left:423px;top:4.4px;font-size:11px;color:#bcbcbc;transform:scaleX(0.950);"><u>H</u>elp</div>
<div class="t" style="left:455px;top:4.4px;font-size:11px;color:#bcbcbc;transform:scaleX(0.891);">Other</div>
<div class="t" style="left:507px;top:4.4px;font-size:11px;color:#727272;transform:scaleX(0.905);">WeatherNews - MainActivity.java [WeatherNews.app.main]</div>
<div style="position:absolute;left:1177px;top:11.3px;width:9px;height:1.5px;background:#808284;"></div>
<svg style="left:1216px;top:7.5px" width="9.5" height="9" viewBox="0 0 9.5 9"><path d="M2.5 2.5V0.5H9V6.5H7M0.5 2.5H7V8.5H0.5Z" fill="none" stroke="#6e7072" stroke-width="1"/></svg>
<svg style="left:1256px;top:8.2px" width="8" height="8" viewBox="0 0 8 8"><path d="M0.4 0.4L7.6 7.6M7.6 0.4L0.4 7.6" fill="none" stroke="#d4d4d4" stroke-width="1.1"/></svg>
<div class="t" style="left:6.8px;top:28.4px;font-size:11px;color:#e6e6e6;font-weight:bold;transform:scaleX(0.917);">WeatherNews</div>
<div class="t" style="left:87px;top:28.4px;font-size:11px;color:#e6e6e6;font-weight:bold;transform:scaleX(0.869);">app</div>
<div class="t" style="left:117.5px;top:28.4px;font-size:11px;color:#c4c4c4;transform:scaleX(0.805);">src</div>
<div class="t" style="left:143.9px;top:28.4px;font-size:11px;color:#e6e6e6;font-weight:bold;transform:scaleX(0.904);">main</div>
<div class="t" style="left:179.7px;top:28.4px;font-size:11px;color:#c4c4c4;transform:scaleX(0.922);">java</div>
<div class="t" style="left:212.7px;top:28.4px;font-size:11px;color:#c4c4c4;transform:scaleX(0.914);">com</div>
<div class="t" style="left:245.6px;top:28.4px;font-size:11px;color:#c4c4c4;transform:scaleX(0.926);">example</div>
<div class="t" style="left:297.5px;top:28.4px;font-size:11px;color:#c4c4c4;transform:scaleX(0.887);">weathernews</div>
<div class="t" style="left:382px;top:28.4px;font-size:11px;color:#c4c4c4;transform:scaleX(0.920);">MainActivity</div>
<div class="t" style="left:464px;top:28.4px;font-size:11px;color:#c4c4c4;transform:scaleX(0.862);">onCreate</div>
<svg style="left:77.5px;top:33.9px" width="3.4" height="5" viewBox="0 0 4 6"><path d="M0.7 0.7L3 3L0.7 5.3" fill="none" stroke="#8c8c8c" stroke-width="1.1"/></svg>
<svg style="left:108.5px;top:33.9px" width="3.4" height="5" viewBox="0 0 4 6"><path d="M0.7 0.7L3 3L0.7 5.3" fill="none" stroke="#8c8c8c" stroke-width="1.1"/></svg>
<svg style="left:134.5px;top:33.9px" width="3.4" height="5" viewBox="0 0 4 6"><path d="M0.7 0.7L3 3L0.7 5.3" fill="none" stroke="#8c8c8c" stroke-width="1.1"/></svg>
<svg style="left:171.9px;top:33.9px" width="3.4" height="5" viewBox="0 0 4 6"><path d="M0.7 0.7L3 3L0.7 5.3" fill="none" stroke="#8c8c8c" stroke-width="1.1"/></svg>
<svg style="left:203.1px;top:33.9px" width="3.4" height="5" viewBox="0 0 4 6"><path d="M0.7 0.7L3 3L0.7 5.3" fill="none" stroke="#8c8c8c" stroke-width="1.1"/></svg>
<svg style="left:236.9px;top:33.9px" width="3.4" height="5" viewBox="0 0 4 6"><path d="M0.7 0.7L3 3L0.7 5.3" fill="none" stroke="#8c8c8c" stroke-width="1.1"/></svg>
<svg style="left:288.5px;top:33.9px" width="3.4" height="5" viewBox="0 0 4 6"><path d="M0.7 0.7L3 3L0.7 5.3" fill="none" stroke="#8c8c8c" stroke-width="1.1"/></svg>
<svg style="left:359.5px;top:33.9px" width="3.4" height="5" viewBox="0 0 4 6"><path d="M0.7 0.7L3 3L0.7 5.3" fill="none" stroke="#8c8c8c" stroke-width="1.1"/></svg>
<svg style="left:439.5px;top:33.9px" width="3.4" height="5" viewBox="0 0 4 6"><path d="M0.7 0.7L3 3L0.7 5.3" fill="none" stroke="#8c8c8c" stroke-width="1.1"/></svg>
<svg style="left:367px;top:30.9px" width="11" height="11" viewBox="0 0 12 12"><path d="M6 0.3L11.2 3V9L6 11.7L0.8 9V3Z" fill="#4fc3f7"/><path d="M6 1.9L9 3.5L6 5.1L3 3.5Z" fill="#1f2b36"/></svg>
<svg style="left:447px;top:32.4px" width="13" height="9" viewBox="0 0 13 9"><path d="M0 1.5H4M1 4H4M0 6.5H4" stroke="#9aa7b0" stroke-width="1"/><path d="M8.8 0.1L12.8 2.2V6.8L8.8 8.9L4.8 6.8V2.2Z" fill="#7c9df5"/><path d="M8.8 1.4L11 2.6L8.8 3.8L6.6 2.6Z" fill="#a9c0ff"/></svg>
<svg style="left:754px;top:30px" width="13" height="13" viewBox="0 0 13 13"><path d="M1 12L7.5 4.5" stroke="#e0556f" stroke-width="1.8"/><path d="M4.5 1.2L7 0.5L12 5.5L10.5 7L8 4.8L6.3 5.2Z" fill="#e0556f"/></svg>
<div style="position:absolute;left:777px;top:28px;width:62px;height:16px;background:#3c3e42;border-radius:3px"></div>
<svg style="left:785px;top:32px" width="11" height="7.3" viewBox="0 0 12 8"><path d="M0 8Q0 2 6 2Q12 2 12 8Z" fill="#3ddc84"/><path d="M2.3 0.2L3.8 2.8M9.7 0.2L8.2 2.8" stroke="#3ddc84" stroke-width="0.9"/><circle cx="3.6" cy="5.4" r=".7" fill="#2b2d30"/><circle cx="8.4" cy="5.4" r=".7" fill="#2b2d30"/></svg>
<div style="position:absolute;left:793px;top:38.5px;width:3px;height:3px;background:#2fd16a;"></div>
<div class="t" style="left:800.8px;top:28.0px;font-size:11px;color:#d0d0d0;transform:scaleX(0.964);">app</div>
<svg style="left:824px;top:33.5px" width="8" height="5" viewBox="0 0 8 5"><path d="M0 0H8L4 5Z" fill="#9da0a2"/></svg>
<div style="position:absolute;left:846px;top:28px;width:103px;height:16px;background:#3c3e42;border-radius:3px"></div>
<svg style="left:855px;top:30px" width="11" height="12" viewBox="0 0 11 12"><rect x="0.6" y="0.6" width="6.3" height="10.3" rx="1" fill="none" stroke="#b8bcc0" stroke-width="1.1"/><rect x="5.5" y="6.5" width="5" height="5" fill="#8c5fb5"/><rect x="7" y="8" width="3.5" height="3.5" fill="#2fe05a"/></svg>
<div class="t" style="left:869px;top:28.0px;font-size:11px;color:#d0d0d0;transform:scaleX(0.859);">Pixel 4 API 27</div>
<svg style="left:934px;top:33.5px" width="8" height="5" viewBox="0 0 8 5"><path d="M0 0H8L4 5Z" fill="#9da0a2"/></svg>
<svg style="left:959px;top:30px" width="11" height="12" viewBox="0 0 11 12"><path d="M5.5 2.2A4.3 4.3 0 1 1 1.8 4.2" fill="none" stroke="#35a9a0" stroke-width="1.3"/><path d="M5.8 0L3.2 2.3L5.8 4.6Z" fill="#35a9a0"/></svg>
<svg style="left:980px;top:29px" width="12" height="14" viewBox="0 0 12 14"><path d="M1 10.5V8Q1 4 5.5 4H8.5" fill="none" stroke="#3fae4b" stroke-width="1.5"/><path d="M7.5 0.8L11.3 4L7.5 7.2Z" fill="#3fae4b"/></svg>
<div class="t" style="left:986.5px;top:31.0px;font-size:7px;color:#b9bcbe;font-weight:bold;transform:scaleX(1.000);">A</div>
<svg style="left:1002.7px;top:32px" width="13" height="11" viewBox="0 0 13 11"><path d="M0 0.9H10.3M0 3.7H10.3" stroke="#b9bcbe" stroke-width="1.7"/><path d="M0 6.5H6.8M0 9.2H6.8" stroke="#b9bcbe" stroke-width="1.7"/><path d="M8 6.8H10.5Q12.3 6.8 12.3 8.6Q12.3 10.3 10.5 10.3H9.6" fill="none" stroke="#3fae4b" stroke-width="1.1"/><path d="M9.2 5L7 6.8L9.2 8.6Z" fill="#3fae4b"/></svg>
<svg style="left:1023.5px;top:30px" width="11.5" height="12" viewBox="0 0 12 12"><ellipse cx="6" cy="6.8" rx="3.6" ry="4.4" fill="#f2416b"/><circle cx="6" cy="2.3" r="2" fill="#f2416b"/><path d="M0.5 3.5L3 5M11.5 3.5L9 5M0 7H3M12 7H9M0.5 10.8L3 9M11.5 10.8L9 9" stroke="#f2416b" stroke-width="1.1"/><path d="M4 5.5H8M4 8H8" stroke="#2b2d30" stroke-width=".8"/></svg>
<svg style="left:1046px;top:30.5px" width="11" height="11" viewBox="0 0 11 11"><circle cx="5.5" cy="5.5" r="4.8" fill="none" stroke="#55585a" stroke-width="1" stroke-dasharray="6 1.5"/><path d="M4.2 3.3L7.8 5.5L4.2 7.7Z" fill="#55585a"/></svg>
<svg style="left:1065.5px;top:31.5px" width="12" height="9" viewBox="0 0 12 9"><path d="M1.3 8.6A4.8 4.8 0 0 1 10.7 8.6" fill="none" stroke="#b9bcbe" stroke-width="2.2"/><path d="M1.3 8.6A4.8 4.8 0 0 1 2.9 3.9" fill="none" stroke="#3fae4b" stroke-width="2.2"/><path d="M6.2 8.2L3.4 2.6" stroke="#2b2d30" stroke-width="2.6"/><path d="M6.2 8.4L3.6 3" stroke="#b9bcbe" stroke-width="1.3"/></svg>
<svg style="left:1083.5px;top:34px" width="7" height="4" viewBox="0 0 7 4"><path d="M0 0H7L3.5 4Z" fill="#9da0a2"/></svg>
<svg style="left:1099.5px;top:30px" width="8.5" height="12" viewBox="0 0 8 12"><path d="M2 0V3M6 0V3" stroke="#e07c5f" stroke-width="1.4"/><path d="M0.3 2.8H7.7V6Q7.7 8.6 5 9V12H3V9Q.3 8.6 .3 6Z" fill="#e07c5f"/></svg>
<div style="position:absolute;left:1121px;top:31.4px;width:9.6px;height:9.6px;background:#f2416b;"></div>
<div style="position:absolute;left:1139.5px;top:28px;width:1px;height:16px;background:#3d3d3d;"></div>
<svg style="left:1147px;top:30px" width="13" height="12" viewBox="0 0 13 12"><path d="M0.5 9.5V5.5Q0.5 2 4 2H7.5Q8.5 0 10.5 0.3Q12.8 0.8 12.5 3.2Q12.3 4.2 11 4.2Q10.3 4.2 10 3.6Q9.6 4.5 9.8 5.5V7H7.6V6.8H6.2V9.5H3.9V7H2.7V9.5Z" fill="#a9b3ba"/><path d="M12 6.5L8 10.5M7.6 7.6V11H11" fill="none" stroke="#3592e0" stroke-width="1.4"/></svg>
<svg style="left:1170.5px;top:30px" width="11" height="12" viewBox="0 0 11 12"><rect x="0.7" y="0.7" width="6.3" height="9.6" rx="1" fill="none" stroke="#b8bcc0" stroke-width="1.2"/><path d="M4 12Q4 7.5 7.5 7.5Q11 7.5 11 12Z" fill="#2fd16a"/><path d="M5.2 6.3L6 7.8M9.8 6.3L9 7.8" stroke="#2fd16a" stroke-width=".8"/></svg>
<svg style="left:1190px;top:30px" width="13" height="13" viewBox="0 0 13 13"><path d="M5 0.3L9.6 2.6V7.6L5 9.9L0.4 7.6V2.6Z" fill="#b9bcbe"/><path d="M5 5V9.5M5 5L0.8 2.9M5 5L9.2 2.9" stroke="#2b2d30" stroke-width=".9"/><path d="M10.2 6V12M7.6 9.6L10.2 12.2L12.8 9.6" fill="none" stroke="#3592e0" stroke-width="1.4"/></svg>
<div style="position:absolute;left:1210.5px;top:28px;width:1px;height:16px;background:#3d3d3d;"></div>
<svg style="left:1218.5px;top:30.5px" width="11" height="11" viewBox="0 0 11 11"><circle cx="4.2" cy="4.2" r="3.3" fill="none" stroke="#3da6a6" stroke-width="1.3"/><path d="M6.6 6.6L10.3 10.3" stroke="#3da6a6" stroke-width="1.5"/></svg>
<div style="position:absolute;left:1244.6px;top:31px;width:2.2px;height:2.2px;background:#e0e0e0;border-radius:1px"></div>
<div style="position:absolute;left:1244.6px;top:35px;width:2.2px;height:2.2px;background:#e0e0e0;border-radius:1px"></div>
<div style="position:absolute;left:1244.6px;top:39px;width:2.2px;height:2.2px;background:#e0e0e0;border-radius:1px"></div>
<div style="position:absolute;left:1260.4px;top:29.2px;width:13.6px;height:13.8px;background:#d9d9d9;"></div>
<svg style="left:1260.4px;top:29.2px" width="13.6" height="13.8" viewBox="0 0 14 14"><circle cx="7" cy="5" r="2.6" fill="#fff"/><path d="M2 14Q2 8.6 7 8.6Q12 8.6 12 14Z" fill="#fff"/></svg>
<svg style="left:217px;top:53.8px" width="11" height="11" viewBox="0 0 12 12"><path d="M6 0.3L11.2 3V9L6 11.7L0.8 9V3Z" fill="#4fc3f7"/><path d="M6 1.9L9 3.5L6 5.1L3 3.5Z" fill="#1f2b36"/></svg>
<div class="t" style="left:232px;top:51.3px;font-size:11px;color:#d0d0d0;transform:scaleX(0.925);">MainActivity.java</div>
<svg style="left:313px;top:56.5px" width="6" height="6" viewBox="0 0 6 6"><path d="M0.3 0.3L5.7 5.7M5.7 0.3L0.3 5.7" stroke="#8a8a8a" stroke-width="1"/></svg>
<div style="position:absolute;left:209px;top:68px;width:118px;height:3px;background:#6e7073;"></div>
<svg style="left:333.5px;top:55.3px" width="12" height="8" viewBox="0 0 12 8"><path d="M3.2 1L0.8 4L3.2 7M8.8 1L11.2 4L8.8 7M7 0.3L5 7.7" fill="none" stroke="#c792ea" stroke-width="1.2"/></svg>
<div class="t" style="left:349.5px;top:51.3px;font-size:11px;color:#d0d0d0;transform:scaleX(0.896);">activity_main.xml</div>
<svg style="left:431px;top:56.5px" width="6" height="6" viewBox="0 0 6 6"><path d="M0.3 0.3L5.7 5.7M5.7 0.3L0.3 5.7" stroke="#8a8a8a" stroke-width="1"/></svg>
<svg style="left:451px;top:53px" width="12" height="13" viewBox="0 0 12 13"><path d="M2.2 4.3Q2.2 1 6 1Q9.8 1 9.8 4.3Z" fill="#7cb342"/><rect x="2.2" y="4.8" width="7.6" height="5.6" rx=".8" fill="#7cb342"/><rect x="0.2" y="4.8" width="1.5" height="4.4" rx=".7" fill="#7cb342"/><rect x="10.3" y="4.8" width="1.5" height="4.4" rx=".7" fill="#7cb342"/><rect x="3.4" y="10" width="1.6" height="2.8" rx=".7" fill="#7cb342"/><rect x="7" y="10" width="1.6" height="2.8" rx=".7" fill="#7cb342"/><path d="M3.3 0L4.3 1.6M8.7 0L7.7 1.6" stroke="#7cb342" stroke-width=".6"/></svg>
<div class="t" style="left:467px;top:51.3px;font-size:11px;color:#d0d0d0;transform:scaleX(0.923);">AndroidManifest.xml</div>
<svg style="left:566px;top:56.5px" width="6" height="6" viewBox="0 0 6 6"><path d="M0.3 0.3L5.7 5.7M5.7 0.3L0.3 5.7" stroke="#8a8a8a" stroke-width="1"/></svg>
<div style="position:absolute;left:830.8px;top:55.0px;width:2.4px;height:2.4px;background:#e0a918;border-radius:1.2px"></div>
<div style="position:absolute;left:830.8px;top:58.6px;width:2.4px;height:2.4px;background:#e0a918;border-radius:1.2px"></div>
<div style="position:absolute;left:830.8px;top:62.2px;width:2.4px;height:2.4px;background:#e0a918;border-radius:1.2px"></div>
<svg style="left:753px;top:77px" width="12.5" height="11" viewBox="0 0 12.5 11"><path d="M6.25 0.3L12.3 10.7H0.2Z" fill="#e0a31a"/><path d="M6.25 4V7.3M6.25 8.3V9.6" stroke="#2b2d30" stroke-width="1.2"/></svg>
<div class="t" style="left:768px;top:74.5px;font-size:10.5px;color:#b5b5b5;transform:scaleX(0.872);">11</div>
<div class="t" style="left:784px;top:73.5px;font-size:10.5px;color:#4fb3bf;transform:scaleX(0.950);">A</div>
<svg style="left:787px;top:83px" width="9" height="6" viewBox="0 0 9 6"><path d="M0.8 2.5L3 5L8.3 0.6" fill="none" stroke="#4fb3bf" stroke-width="1.2"/></svg>
<div class="t" style="left:798px;top:74.5px;font-size:10.5px;color:#b5b5b5;transform:scaleX(0.788);">2</div>
<svg style="left:810.5px;top:77.5px" width="9" height="10" viewBox="0 0 9 10"><path d="M4.5 10V1M0.7 4.8L4.5 1L8.3 4.8" fill="none" stroke="#4fb3bf" stroke-width="1.2"/></svg>
<svg style="left:827.5px;top:77.5px" width="9" height="10" viewBox="0 0 9 10"><path d="M4.5 0V9M0.7 5.2L4.5 9L8.3 5.2" fill="none" stroke="#4fb3bf" stroke-width="1.2"/></svg>
<div class="t" style="left:848.6px;top:51.5px;font-size:11px;color:#d0d0d0;transform:scaleX(0.864);">Running Devices:</div>
<svg style="left:942px;top:53.5px" width="11" height="12" viewBox="0 0 11 12"><rect x="0.6" y="0.6" width="6.3" height="10.3" rx="1" fill="none" stroke="#b8bcc0" stroke-width="1.1"/><rect x="5.5" y="6.5" width="5" height="5" fill="#8c5fb5"/><rect x="7" y="8" width="3.5" height="3.5" fill="#2fe05a"/></svg>
<div class="t" style="left:956.2px;top:51.5px;font-size:11px;color:#d0d0d0;transform:scaleX(0.859);">Pixel 4 API 27</div>
<svg style="left:1021.5px;top:56.5px" width="6" height="6" viewBox="0 0 6 6"><path d="M0.3 0.3L5.7 5.7M5.7 0.3L0.3 5.7" stroke="#8a8a8a" stroke-width="1"/></svg>
<div style="position:absolute;left:929px;top:68px;width:108px;height:2.6px;background:#585a5e;"></div>
<svg style="left:1194.5px;top:54.2px" width="12" height="11" viewBox="0 0 12 11"><rect x="0.6" y="0.6" width="10.8" height="9.8" fill="none" stroke="#c8c8c8" stroke-width="1.2"/><rect x="0.6" y="0.6" width="10.8" height="2.6" fill="#c8c8c8"/></svg>
<div style="position:absolute;left:1214px;top:51px;width:1px;height:16px;background:#3a3a3a;"></div>
<div style="position:absolute;left:1227.4px;top:55px;width:2.2px;height:2.2px;background:#e0e0e0;border-radius:1px"></div>
<div style="position:absolute;left:1227.4px;top:59px;width:2.2px;height:2.2px;background:#e0e0e0;border-radius:1px"></div>
<div style="position:absolute;left:1227.4px;top:63px;width:2.2px;height:2.2px;background:#e0e0e0;border-radius:1px"></div>
<div style="position:absolute;left:1245px;top:58.4px;width:10.5px;height:2px;background:#f0f0f0;"></div>
<svg style="left:849px;top:77.2px" width="11" height="11" viewBox="0 0 11 11"><path d="M3.3 2.2A4.3 4.3 0 1 0 7.7 2.2" fill="none" stroke="#b4b7ba" stroke-width="1.4"/><path d="M5.5 0V5" stroke="#b4b7ba" stroke-width="1.4"/></svg>
<svg style="left:867px;top:77.7px" width="11.5" height="10" viewBox="0 0 11.5 10"><path d="M0 3.3H2.5L6 0.3V9.7L2.5 6.7H0Z" fill="#b4b7ba"/><path d="M7.3 2.8Q8.6 5 7.3 7.2M8.6 1Q11.4 5 8.6 9" fill="none" stroke="#b4b7ba" stroke-width="1.1"/></svg>
<svg style="left:886.5px;top:77.7px" width="9.5" height="10" viewBox="0 0 9.5 10"><path d="M0 3.3H2.5L6 0.3V9.7L2.5 6.7H0Z" fill="#b4b7ba"/><path d="M7.3 2.8Q8.6 5 7.3 7.2" fill="none" stroke="#b4b7ba" stroke-width="1.1"/></svg>
<svg style="left:904.5px;top:76.7px" width="13" height="12" viewBox="0 0 13 12"><rect x="0.7" y="1.5" width="5.6" height="9.5" rx="1" fill="none" stroke="#b4b7ba" stroke-width="1.2"/><path d="M8.5 1.5Q12.5 6 8.8 10.5" fill="none" stroke="#3592e0" stroke-width="1.4"/><path d="M7.2 0L11 1L8.2 3.8Z" fill="#3592e0"/></svg>
<svg style="left:926.5px;top:76.7px" width="13" height="12" viewBox="0 0 13 12"><rect x="6.7" y="1.5" width="5.6" height="9.5" rx="1" fill="none" stroke="#b4b7ba" stroke-width="1.2"/><path d="M4.5 1.5Q.5 6 4.2 10.5" fill="none" stroke="#3592e0" stroke-width="1.4"/><path d="M5.8 0L2 1L4.8 3.8Z" fill="#3592e0"/></svg>
<svg style="left:951px;top:78.7px" width="7.5" height="8" viewBox="0 0 7.5 8"><path d="M7.5 0V8L0 4Z" fill="#b4b7ba"/></svg>
<svg style="left:972px;top:78.9px" width="7.6" height="7.6"><circle cx="3.8" cy="3.8" r="3.8" fill="#b4b7ba"/></svg>
<div style="position:absolute;left:994px;top:78.9px;width:7.6px;height:7.6px;background:#b4b7ba;"></div>
<svg style="left:1013px;top:77.7px" width="12.5" height="10.5" viewBox="0 0 12.5 10.5"><path d="M0 2.6Q0 1.6 1 1.6H3.2L4.2 0H8.3L9.3 1.6H11.5Q12.5 1.6 12.5 2.6V9.5Q12.5 10.5 11.5 10.5H1Q0 10.5 0 9.5Z" fill="#b4b7ba"/><circle cx="6.25" cy="5.9" r="2.6" fill="#2b2d30"/><circle cx="6.25" cy="5.9" r="1.4" fill="#b4b7ba"/></svg>
<svg style="left:1035.4px;top:78.7px" width="12" height="8.5" viewBox="0 0 12 8.5"><rect x="0" y="0" width="8" height="8.5" rx="1" fill="#b4b7ba"/><path d="M8 4.2L12 0.8V7.7Z" fill="#b4b7ba"/></svg>
<svg style="left:1056.5px;top:76.7px" width="13" height="12.5" viewBox="0 0 13 12.5"><path d="M2.3 4A5 5 0 1 1 2 8.4" fill="none" stroke="#b4b7ba" stroke-width="1.3"/><path d="M0 1.6L4.6 2.2L1.8 6Z" fill="#b4b7ba"/><path d="M6.8 4V7H9.3" fill="none" stroke="#b4b7ba" stroke-width="1.1"/></svg>
<div style="position:absolute;left:1083.4px;top:78.8px;width:2.4px;height:2.4px;background:#e0a918;border-radius:1.2px"></div>
<div style="position:absolute;left:1083.4px;top:82.1px;width:2.4px;height:2.4px;background:#e0a918;border-radius:1.2px"></div>
<div style="position:absolute;left:1083.4px;top:85.39999999999999px;width:2.4px;height:2.4px;background:#e0a918;border-radius:1.2px"></div>
<div style="position:absolute;left:843px;top:96px;width:415px;height:555px;overflow:hidden">
<div style="position:absolute;left:-843px;top:-96px;width:1280px;height:685px">
<div style="position:absolute;left:1179px;top:232px;width:3.6px;height:33px;background:#e8806a;border-radius:1.5px"></div>
<div style="position:absolute;left:1179px;top:288px;width:2.5px;height:36px;background:#1a1a1a;border-radius:1px"></div>
<div style="position:absolute;left:922px;top:96.5px;width:256.5px;height:552.5px;box-sizing:border-box;border-radius:32px 32px 28px 28px;background:#060608;border-style:solid;border-width:1.3px 1.2px 1.2px 1.3px;border-color:#b4b6b8 #6a6b6c #55575a #a4a6a8;box-shadow:inset 0 0 0 1.5px #1b1b1d, inset 0 0 0 2.7px #46484b, inset 0 0 0 3.8px #0c0c0e;"></div>
<div style="position:absolute;left:930.3px;top:128.2px;width:241.2px;height:507.2px;border-radius:19px 19px 20px 20px;background:linear-gradient(#686664 0%,#686664 30%,#5e5c58 100%);overflow:hidden">
<div style="position:absolute;left:0;top:477.5px;width:242px;height:30px;background:#666462"></div>
</div>
<svg style="left:986px;top:111px" width="12" height="12"><circle cx="6" cy="6" r="5" fill="#1c1c1e"/><circle cx="6" cy="6" r="2.4" fill="#2c2c30"/><circle cx="5.4" cy="5.4" r=".9" fill="#55585c"/></svg>
<div style="position:absolute;left:1006px;top:111px;width:5px;height:11px;background:#161618;border-radius:2.5px"></div>
<div style="position:absolute;left:1038px;top:115px;width:26px;height:2.4px;background:#2a2a2c;border-radius:1.2px"></div>
<svg style="left:941.7px;top:131.3px" width="9.4" height="9.4"><circle cx="4.7" cy="4.7" r="4.5" fill="#b4b3b2" stroke="#c9c8c7" stroke-width=".6"/></svg>
<svg style="left:957.7px;top:131.4px" width="7.4" height="9.2" viewBox="0 0 7.4 9.2"><path d="M2.2 0H6.6Q7.4 0 7.4 .8V8.4Q7.4 9.2 6.6 9.2H.8Q0 9.2 0 8.4V2.2Z" fill="#fff"/><path d="M2.6 1V2.6M4 1V2.6M5.4 1V2.6" stroke="#6a6866" stroke-width=".7"/></svg>
<svg style="left:1103.5px;top:131.6px" width="11.5" height="9" viewBox="0 0 11.5 9"><path d="M0 2.6Q5.75 -2.4 11.5 2.6L5.75 9Z" fill="#fff"/><rect x="7.4" y="5" width="4.1" height="4" fill="#6a6866"/><path d="M8.3 5.8L10.9 8.4M10.9 5.8L8.3 8.4" stroke="#fff" stroke-width=".8"/></svg>
<svg style="left:1115.7px;top:131.6px" width="8.8" height="9" viewBox="0 0 8.8 9"><path d="M8.8 0V9H0Z" fill="#9f9e9c"/><path d="M5.6 3.3V9H0Z" fill="#fff"/></svg>
<svg style="left:1129.4px;top:131px" width="6" height="10" viewBox="0 0 6 10"><path d="M1.8 0H4.2V1H5.4Q6 1 6 1.6V9.4Q6 10 5.4 10H.6Q0 10 0 9.4V1.6Q0 1 .6 1H1.8Z" fill="#fff"/></svg>
<div class="t" style="left:1140px;top:128.0px;font-size:9.5px;color:#fff;transform:scaleX(0.883);">10:22</div>
<div style="position:absolute;left:946px;top:153px;width:209.5px;height:26.7px;border-radius:13.4px;background:#747371;box-shadow:0 1px 1.5px rgba(0,0,0,.3)"></div>
<svg style="left:953.4px;top:158.9px" width="15" height="15" viewBox="0 0 16 16"><path d="M12.75 4.67A5.8 5.8 0 0 0 2.98 5.1" fill="none" stroke="#bd362a" stroke-width="2.7"/><path d="M2.98 5.1A5.8 5.8 0 0 0 2.98 10.9" fill="none" stroke="#c99a0c" stroke-width="2.7"/><path d="M2.98 10.9A5.8 5.8 0 0 0 11.73 12.44" fill="none" stroke="#2a8947" stroke-width="2.7"/><path d="M11.73 12.44A5.8 5.8 0 0 0 13.8 8" fill="none" stroke="#2d5ebc" stroke-width="2.7"/><path d="M8.2 8H15" stroke="#2d5ebc" stroke-width="2.5"/></svg>
<svg style="left:946px;top:198.6px" width="30" height="30" viewBox="0 0 30 30"><circle cx="15" cy="15" r="15" fill="#1a338f"/><path d="M7 9.5Q7 8 8.5 8H21.5Q23 8 23 9.5V19.5Q23 21 21.5 21H11L7 24Z" fill="#a1aac4"/><path d="M10 12H20M10 14.7H20M10 17.4H17" stroke="#7680a1" stroke-width="1.3"/></svg>
<svg style="left:990.6px;top:198.6px" width="30" height="30" viewBox="0 0 30 30"><defs><clipPath id="c1005_213"><circle cx="15" cy="15" r="15"/></clipPath></defs><circle cx="15" cy="15" r="15" fill="#2c965c"/><path d="M7 18.5L19 30H30V18L23 18.5Z" fill="#237f4d" clip-path="url(#c1005_213)"/><path d="M6.2 18.6Q6.2 10.6 15 10.6Q23.8 10.6 23.8 18.6Z" fill="#c1c4c2"/><path d="M9.3 7.6L11.2 11.3M20.7 7.6L18.8 11.3" stroke="#bec7c1" stroke-width=".9"/><circle cx="11.2" cy="15.2" r=".9" fill="#2c965c"/><circle cx="18.8" cy="15.2" r=".9" fill="#2c965c"/></svg>
<svg style="left:1035.5px;top:198.6px" width="30" height="30" viewBox="0 0 30 30"><circle cx="15" cy="15" r="15" fill="#1a338f"/><path d="M9.2 7.5L12.4 7L13.8 11L11.9 12.6Q13.6 16.2 17.2 18.1L18.9 16.2L23 17.6L22.4 20.9Q21 22.2 18.7 21.6Q10.4 19.2 8.4 10.6Q8.1 8.6 9.2 7.5Z" fill="#cfd1d8"/></svg>
<svg style="left:1080.5px;top:198.6px" width="30" height="30" viewBox="0 0 30 30"><circle cx="15" cy="15" r="15" fill="#c7c7c7"/><path d="M15 15V5.5L19.5 10Z" fill="#bd3629"/><path d="M15 15H24.5L20 19.5Z" fill="#2c5ebc"/><path d="M15 15V24.5L10.5 20Z" fill="#2a8a48"/><path d="M15 15H5.5L10 10.5Z" fill="#c99a0d"/><path d="M15 15L19.5 10V15Z" fill="#862f26"/><path d="M15 15L20 19.5H15Z" fill="#3b72c3"/><path d="M15 15L10.5 20V15Z" fill="#869a2e"/><path d="M15 15L10 10.5H15Z" fill="#b68410"/></svg>
<svg style="left:1125.2px;top:198.6px" width="30" height="30" viewBox="0 0 30 30"><defs><clipPath id="c1140_213"><circle cx="15" cy="15" r="15"/></clipPath></defs><circle cx="15" cy="15" r="15" fill="#2c965c"/><path d="M7 18.5L19 30H30V18L23 18.5Z" fill="#237f4d" clip-path="url(#c1140_213)"/><path d="M6.2 18.6Q6.2 10.6 15 10.6Q23.8 10.6 23.8 18.6Z" fill="#c1c4c2"/><path d="M9.3 7.6L11.2 11.3M20.7 7.6L18.8 11.3" stroke="#bec7c1" stroke-width=".9"/><circle cx="11.2" cy="15.2" r=".9" fill="#2c965c"/><circle cx="18.8" cy="15.2" r=".9" fill="#2c965c"/></svg>
<div class="t" style="left:944.75px;top:233.6px;font-size:9.5px;color:#31302f;transform:scaleX(0.751);-webkit-text-stroke:0.3px #31302f;">Messages</div>
<div class="t" style="left:989.1px;top:233.6px;font-size:9.5px;color:#31302f;transform:scaleX(0.727);-webkit-text-stroke:0.3px #31302f;">PdfReader</div>
<div class="t" style="left:1040.75px;top:233.6px;font-size:9.5px;color:#31302f;transform:scaleX(0.710);-webkit-text-stroke:0.3px #31302f;">Phone</div>
<div class="t" style="left:1084.75px;top:233.6px;font-size:9.5px;color:#31302f;transform:scaleX(0.727);-webkit-text-stroke:0.3px #31302f;">Photos</div>
<div class="t" style="left:1130.2px;top:233.6px;font-size:9.5px;color:#31302f;transform:scaleX(0.742);-webkit-text-stroke:0.3px #31302f;">Planet</div>
<svg style="left:946px;top:268.6px" width="30" height="30" viewBox="0 0 30 30"><defs><clipPath id="c961_283"><circle cx="15" cy="15" r="15"/></clipPath></defs><circle cx="15" cy="15" r="15" fill="#2c965c"/><path d="M7 18.5L19 30H30V18L23 18.5Z" fill="#237f4d" clip-path="url(#c961_283)"/><path d="M6.2 18.6Q6.2 10.6 15 10.6Q23.8 10.6 23.8 18.6Z" fill="#c1c4c2"/><path d="M9.3 7.6L11.2 11.3M20.7 7.6L18.8 11.3" stroke="#bec7c1" stroke-width=".9"/><circle cx="11.2" cy="15.2" r=".9" fill="#2c965c"/><circle cx="18.8" cy="15.2" r=".9" fill="#2c965c"/></svg>
<svg style="left:990.6px;top:268.6px" width="30" height="30" viewBox="0 0 30 30"><defs><clipPath id="c1005_283"><circle cx="15" cy="15" r="15"/></clipPath></defs><circle cx="15" cy="15" r="15" fill="#2c965c"/><path d="M7 18.5L19 30H30V18L23 18.5Z" fill="#237f4d" clip-path="url(#c1005_283)"/><path d="M6.2 18.6Q6.2 10.6 15 10.6Q23.8 10.6 23.8 18.6Z" fill="#c1c4c2"/><path d="M9.3 7.6L11.2 11.3M20.7 7.6L18.8 11.3" stroke="#bec7c1" stroke-width=".9"/><circle cx="11.2" cy="15.2" r=".9" fill="#2c965c"/><circle cx="18.8" cy="15.2" r=".9" fill="#2c965c"/></svg>
<svg style="left:1035.5px;top:268.6px" width="30" height="30" viewBox="0 0 30 30"><defs><clipPath id="c1050_283"><circle cx="15" cy="15" r="15"/></clipPath></defs><circle cx="15" cy="15" r="15" fill="#2c965c"/><path d="M7 18.5L19 30H30V18L23 18.5Z" fill="#237f4d" clip-path="url(#c1050_283)"/><path d="M6.2 18.6Q6.2 10.6 15 10.6Q23.8 10.6 23.8 18.6Z" fill="#c1c4c2"/><path d="M9.3 7.6L11.2 11.3M20.7 7.6L18.8 11.3" stroke="#bec7c1" stroke-width=".9"/><circle cx="11.2" cy="15.2" r=".9" fill="#2c965c"/><circle cx="18.8" cy="15.2" r=".9" fill="#2c965c"/></svg>
<svg style="left:1080.5px;top:268.6px" width="30" height="30" viewBox="0 0 30 30"><defs><clipPath id="c1095_283"><circle cx="15" cy="15" r="15"/></clipPath></defs><circle cx="15" cy="15" r="15" fill="#2c965c"/><path d="M7 18.5L19 30H30V18L23 18.5Z" fill="#237f4d" clip-path="url(#c1095_283)"/><path d="M6.2 18.6Q6.2 10.6 15 10.6Q23.8 10.6 23.8 18.6Z" fill="#c1c4c2"/><path d="M9.3 7.6L11.2 11.3M20.7 7.6L18.8 11.3" stroke="#bec7c1" stroke-width=".9"/><circle cx="11.2" cy="15.2" r=".9" fill="#2c965c"/><circle cx="18.8" cy="15.2" r=".9" fill="#2c965c"/></svg>
<svg style="left:1125.2px;top:268.6px" width="30" height="30" viewBox="0 0 30 30"><circle cx="15" cy="15" r="15" fill="#c7c7c7"/><path d="M9 6.5L24 14L9 23.5Z" fill="#861e1e"/><path d="M12 8L24 14L12 14Z" fill="#ac2823"/><path d="M12 9.5H20V19H12Z" fill="#a02420"/><path d="M13 11.5H14M13 14H14M13 16.5H14M17 11.5H18M17 14H18M17 16.5H18" stroke="#cd9686" stroke-width=".9"/></svg>
<div class="t" style="left:951.0px;top:303.6px;font-size:9.5px;color:#31302f;transform:scaleX(0.742);-webkit-text-stroke:0.3px #31302f;">Planet</div>
<div class="t" style="left:995.6px;top:303.6px;font-size:9.5px;color:#31302f;transform:scaleX(0.742);-webkit-text-stroke:0.3px #31302f;">Planet</div>
<div class="t" style="left:1040.5px;top:303.6px;font-size:9.5px;color:#31302f;transform:scaleX(0.742);-webkit-text-stroke:0.3px #31302f;">Planet</div>
<div class="t" style="left:1079.5px;top:303.6px;font-size:9.5px;color:#31302f;transform:scaleX(0.748);-webkit-text-stroke:0.3px #31302f;">PlanetInfo</div>
<div class="t" style="left:1123.2px;top:303.6px;font-size:9.5px;color:#31302f;transform:scaleX(0.732);-webkit-text-stroke:0.3px #31302f;">Play Movi..</div>
<svg style="left:946px;top:408.6px" width="30" height="30" viewBox="0 0 30 30"><circle cx="15" cy="15" r="15" fill="#0d655b"/><path d="M15 6.2L17 6.5L17.7 9L19.7 10.1L22.1 9.3L23.4 11.3L21.8 13.2V15.8L23.4 17.7L22.1 19.7L19.7 18.9L17.7 20L17 22.5H13L12.3 20L10.3 18.9L7.9 19.7L6.6 17.7L8.2 15.8V13.2L6.6 11.3L7.9 9.3L10.3 10.1L12.3 9L13 6.5Z" fill="#c1c4c3"/><circle cx="15" cy="14.5" r="3.4" fill="#0d655b"/><circle cx="15" cy="14.5" r="1.6" fill="#c1c4c3"/></svg>
<svg style="left:990.6px;top:408.6px" width="30" height="30" viewBox="0 0 30 30"><defs><clipPath id="c1005_423"><circle cx="15" cy="15" r="15"/></clipPath></defs><circle cx="15" cy="15" r="15" fill="#2c965c"/><path d="M7 18.5L19 30H30V18L23 18.5Z" fill="#237f4d" clip-path="url(#c1005_423)"/><path d="M6.2 18.6Q6.2 10.6 15 10.6Q23.8 10.6 23.8 18.6Z" fill="#c1c4c2"/><path d="M9.3 7.6L11.2 11.3M20.7 7.6L18.8 11.3" stroke="#bec7c1" stroke-width=".9"/><circle cx="11.2" cy="15.2" r=".9" fill="#2c965c"/><circle cx="18.8" cy="15.2" r=".9" fill="#2c965c"/></svg>
<svg style="left:1035.5px;top:408.6px" width="30" height="30" viewBox="0 0 30 30"><defs><clipPath id="c1050_423"><circle cx="15" cy="15" r="15"/></clipPath></defs><circle cx="15" cy="15" r="15" fill="#2c965c"/><path d="M7 18.5L19 30H30V18L23 18.5Z" fill="#237f4d" clip-path="url(#c1050_423)"/><path d="M6.2 18.6Q6.2 10.6 15 10.6Q23.8 10.6 23.8 18.6Z" fill="#c1c4c2"/><path d="M9.3 7.6L11.2 11.3M20.7 7.6L18.8 11.3" stroke="#bec7c1" stroke-width=".9"/><circle cx="11.2" cy="15.2" r=".9" fill="#2c965c"/><circle cx="18.8" cy="15.2" r=".9" fill="#2c965c"/></svg>
<svg style="left:1080.5px;top:408.6px" width="30" height="30" viewBox="0 0 30 30"><defs><clipPath id="c1095_423"><circle cx="15" cy="15" r="15"/></clipPath></defs><circle cx="15" cy="15" r="15" fill="#2c965c"/><path d="M7 18.5L19 30H30V18L23 18.5Z" fill="#237f4d" clip-path="url(#c1095_423)"/><path d="M6.2 18.6Q6.2 10.6 15 10.6Q23.8 10.6 23.8 18.6Z" fill="#c1c4c2"/><path d="M9.3 7.6L11.2 11.3M20.7 7.6L18.8 11.3" stroke="#bec7c1" stroke-width=".9"/><circle cx="11.2" cy="15.2" r=".9" fill="#2c965c"/><circle cx="18.8" cy="15.2" r=".9" fill="#2c965c"/></svg>
<svg style="left:1125.2px;top:408.6px" width="30" height="30" viewBox="0 0 30 30"><defs><clipPath id="c1140_423"><circle cx="15" cy="15" r="15"/></clipPath></defs><circle cx="15" cy="15" r="15" fill="#2c965c"/><path d="M7 18.5L19 30H30V18L23 18.5Z" fill="#237f4d" clip-path="url(#c1140_423)"/><path d="M6.2 18.6Q6.2 10.6 15 10.6Q23.8 10.6 23.8 18.6Z" fill="#c1c4c2"/><path d="M9.3 7.6L11.2 11.3M20.7 7.6L18.8 11.3" stroke="#bec7c1" stroke-width=".9"/><circle cx="11.2" cy="15.2" r=".9" fill="#2c965c"/><circle cx="18.8" cy="15.2" r=".9" fill="#2c965c"/></svg>
<div class="t" style="left:947.75px;top:443.6px;font-size:9.5px;color:#31302f;transform:scaleX(0.772);-webkit-text-stroke:0.3px #31302f;">Settings</div>
<div class="t" style="left:988.1px;top:443.6px;font-size:9.5px;color:#31302f;transform:scaleX(0.736);-webkit-text-stroke:0.3px #31302f;">showCont..</div>
<div class="t" style="left:1033.25px;top:443.6px;font-size:9.5px;color:#31302f;transform:scaleX(0.760);-webkit-text-stroke:0.3px #31302f;">startServi..</div>
<div class="t" style="left:1077.75px;top:443.6px;font-size:9.5px;color:#31302f;transform:scaleX(0.715);-webkit-text-stroke:0.3px #31302f;">ThreadInA..</div>
<div class="t" style="left:1123.7px;top:443.6px;font-size:9.5px;color:#31302f;transform:scaleX(0.713);-webkit-text-stroke:0.3px #31302f;">Unit Conv..</div>
<svg style="left:946px;top:478.6px" width="30" height="30" viewBox="0 0 30 30"><defs><clipPath id="c961_493"><circle cx="15" cy="15" r="15"/></clipPath></defs><circle cx="15" cy="15" r="15" fill="#2c965c"/><path d="M7 18.5L19 30H30V18L23 18.5Z" fill="#237f4d" clip-path="url(#c961_493)"/><path d="M6.2 18.6Q6.2 10.6 15 10.6Q23.8 10.6 23.8 18.6Z" fill="#c1c4c2"/><path d="M9.3 7.6L11.2 11.3M20.7 7.6L18.8 11.3" stroke="#bec7c1" stroke-width=".9"/><circle cx="11.2" cy="15.2" r=".9" fill="#2c965c"/><circle cx="18.8" cy="15.2" r=".9" fill="#2c965c"/></svg>
<svg style="left:990.6px;top:478.6px" width="30" height="30" viewBox="0 0 30 30"><circle cx="15" cy="15" r="15" fill="#222c8b"/><rect x="6.5" y="6.5" width="17" height="16" fill="#3869c6" stroke="#131313" stroke-width="1.2"/><path d="M7 22L12.5 12.5L17 19L19 16.5L23 22Z" fill="#92ab27"/><circle cx="19.5" cy="10.5" r="1.5" fill="#d3971e"/></svg>
<svg style="left:1035.5px;top:478.6px" width="30" height="30" viewBox="0 0 30 30"><circle cx="15" cy="15" r="15" fill="#222c8b"/><rect x="6.5" y="6.5" width="17" height="16" fill="#3869c6" stroke="#131313" stroke-width="1.2"/><path d="M7 22L12.5 12.5L17 19L19 16.5L23 22Z" fill="#92ab27"/><circle cx="19.5" cy="10.5" r="1.5" fill="#d3971e"/></svg>
<svg style="left:1080.5px;top:478.6px" width="30" height="30" viewBox="0 0 30 30"><circle cx="15" cy="15" r="15" fill="#c7c7c7"/><rect x="11" y="8" width="13" height="11" fill="#d0d6da" stroke="#818c96" stroke-width=".8"/><circle cx="10.5" cy="13" r="3" fill="#cb9e81"/><path d="M5.5 23Q5.5 16.5 10.5 16.5Q15.5 16.5 15.5 23Z" fill="#3696ac"/><path d="M7.5 12.5Q8 9 11 9.5Q13.8 10 13.4 13.5L12.5 11.5L8.5 11.8Z" fill="#362720"/><ellipse cx="18.5" cy="12.5" rx="2.6" ry="1.4" fill="#549ec8"/></svg>
<svg style="left:1125.2px;top:477.6px" width="30" height="32" viewBox="0 0 30 32"><path d="M8 9.5Q8 3.2 15 3.2Q22 3.2 22 9.5Z" fill="#759928"/><path d="M10 0.5L12 4M20 0.5L18 4" stroke="#759928" stroke-width="1"/><rect x="8" y="10.3" width="14" height="13.5" rx="1.5" fill="#759928"/><rect x="3.6" y="10.3" width="3.4" height="10" rx="1.7" fill="#759928"/><rect x="23" y="10.3" width="3.4" height="10" rx="1.7" fill="#759928"/><rect x="10.2" y="22" width="3.6" height="8.5" rx="1.8" fill="#759928"/><rect x="16.2" y="22" width="3.6" height="8.5" rx="1.8" fill="#759928"/><circle cx="12" cy="6.8" r=".9" fill="#d0d8ba"/><circle cx="18" cy="6.8" r=".9" fill="#d0d8ba"/><path d="M15 13.5L20 16V21.5L15 24L10 21.5V16Z" fill="#bcc5b3" stroke="#4f6b18" stroke-width=".7"/><path d="M15 18.5V24M15 18.5L10 16M15 18.5L20 16" stroke="#4f6b18" stroke-width=".7" fill="none"/></svg>
<div class="t" style="left:944.5px;top:512.8px;font-size:9.5px;color:#31302f;transform:scaleX(0.713);-webkit-text-stroke:0.3px #31302f;">Unit Conv..</div>
<div class="t" style="left:990.1px;top:512.8px;font-size:9.5px;color:#31302f;transform:scaleX(0.731);-webkit-text-stroke:0.3px #31302f;">Wallpaper</div>
<div class="t" style="left:1035.0px;top:512.8px;font-size:9.5px;color:#31302f;transform:scaleX(0.731);-webkit-text-stroke:0.3px #31302f;">Wallpaper</div>
<div class="t" style="left:1078.75px;top:512.8px;font-size:9.5px;color:#31302f;transform:scaleX(0.700);-webkit-text-stroke:0.3px #31302f;">WeatherN..</div>
<div class="t" style="left:1124.2px;top:512.8px;font-size:9.5px;color:#31302f;transform:scaleX(0.719);-webkit-text-stroke:0.3px #31302f;">WebView..</div>
<svg style="left:947px;top:549.6px" width="28" height="28" viewBox="0 0 28 28"><path d="M1.5 2.5L26.5 1.2V19L2.5 25.5Z" fill="#b8b9b9"/><path d="M1.5 2.5L26.5 1.2V5L1.6 7Z" fill="#3b5da4"/><path d="M12.2 13.6H15.8M14 11.8V15.4" stroke="#222" stroke-width="1"/><path d="M1 3V0.8H3.5M24.5 0.8H27V3M1 24V27H3.5M24.5 27H27V24" fill="none" stroke="#1c1c1c" stroke-width="1.1"/></svg>
<svg style="left:990.6px;top:548.6px" width="30" height="30" viewBox="0 0 30 30"><circle cx="15" cy="15" r="15" fill="#c7c7c7"/><rect x="4.6" y="7.6" width="20.8" height="14.8" rx="3.6" fill="#9f1a11"/><path d="M12.6 11.6L18.6 15L12.6 18.4Z" fill="#d1d1d1"/></svg>
<div class="t" style="left:944.0px;top:583.2px;font-size:9.5px;color:#31302f;transform:scaleX(0.732);-webkit-text-stroke:0.3px #31302f;">Widget Pr..</div>
<div class="t" style="left:992.1px;top:583.2px;font-size:9.5px;color:#31302f;transform:scaleX(0.723);-webkit-text-stroke:0.3px #31302f;">YouTube</div>
<div style="position:absolute;left:1166.5px;top:574.6px;width:4px;height:31px;background:#0d5952;border-radius:2px 0 0 2px"></div>
<svg style="left:980.5px;top:616.8px" width="8" height="8.6" viewBox="0 0 8 8.6"><path d="M8 0V8.6L0 4.3Z" fill="#fff"/></svg>
<svg style="left:1044.3px;top:615px" width="12" height="12" viewBox="0 0 12 12"><circle cx="6" cy="6" r="5.3" fill="none" stroke="#dedede" stroke-width="1"/><circle cx="6" cy="6" r="3.9" fill="#fff"/></svg>
<div style="position:absolute;left:1113px;top:617px;width:8px;height:8px;background:#fff;border-radius:1px"></div>
<div style="position:absolute;left:946px;top:339px;width:209px;height:71px;background:#fff;border-radius:1.5px;box-shadow:0 3px 8px rgba(0,0,0,.35)"></div>
<div class="t" style="left:961.4px;top:351.0px;font-size:12.5px;color:#1f1f1f;transform:scaleX(0.978);-webkit-text-stroke:0.4px #1f1f1f;">WeatherNews has stopped</div>
<div class="t" style="left:995.8px;top:382.8px;font-size:10px;color:#2a2a2a;transform:scaleX(0.953);">Open app again</div>
<svg style="left:963.6px;top:385px" width="10.5" height="11" viewBox="0 0 10.5 11"><path d="M9.2 5.8A4.1 4.1 0 1 1 7.7 2.5" fill="none" stroke="#1f9a8f" stroke-width="1.5"/><path d="M5.8 0.1L9.9 0.6L9 4.5Z" fill="#1f9a8f"/></svg>
</div></div>
<div style="position:absolute;left:1222.8px;top:543.5px;width:23.5px;height:89.5px;box-sizing:border-box;border:1px solid #3f3f3f;border-radius:4px;background:#323232"></div>
<svg style="left:1230.8px;top:552px" width="9" height="9" viewBox="0 0 9 9"><path d="M4.5 0V9M0 4.5H9" stroke="#3ba7cc" stroke-width="1.3"/></svg>
<div style="position:absolute;left:1231px;top:576.6px;width:8.5px;height:1px;background:#505050;"></div>
<svg style="left:1228.5px;top:593px" width="14" height="14" viewBox="0 0 14 14"><circle cx="5" cy="5" r="3.9" fill="none" stroke="#8fb53a" stroke-width="1.3"/><path d="M7.8 7.8L13 13" stroke="#8fb53a" stroke-width="1.5"/><rect x="3.3" y="3.3" width="3.4" height="3.4" fill="none" stroke="#8fb53a" stroke-width=".7"/></svg>
<svg style="left:1229.5px;top:616.5px" width="11" height="10" viewBox="0 0 11 10"><rect x="0.5" y="0.5" width="10" height="9" fill="none" stroke="#4d4d4d" stroke-width="1"/><path d="M2.5 4.5V2.5H4.5M8.5 5.5V7.5H6.5" fill="none" stroke="#4d4d4d" stroke-width=".9"/></svg>
<svg style="left:26.5px;top:656.4px" width="7" height="11" viewBox="0 0 7 11"><path d="M1.5 2V9M5.5 2Q5.5 5.5 1.5 6.5" fill="none" stroke="#3592e0" stroke-width="1.2"/><circle cx="1.5" cy="1.6" r="1.3" fill="#3592e0"/><circle cx="5.5" cy="1.6" r="1.3" fill="#3592e0"/><circle cx="1.5" cy="9.4" r="1.3" fill="#3592e0"/></svg>
<div class="t" style="left:39.5px;top:653.9px;font-size:11px;color:#c8c8c8;transform:scaleX(0.811);">Version Control</div>
<svg style="left:121px;top:657.4px" width="10" height="10" viewBox="0 0 10 10"><path d="M0.5 0L7 4L0.5 8Z" fill="#a3ad8c"/><circle cx="7.6" cy="7.8" r="1.8" fill="#2fe05a"/></svg>
<div class="t" style="left:133.5px;top:653.9px;font-size:11px;color:#c8c8c8;transform:scaleX(0.694);">Run</div>
<svg style="left:164px;top:658.3px" width="10.5" height="7" viewBox="0 0 12 8"><path d="M1.3 7.8A4.9 4.9 0 0 1 10.7 7.8" fill="none" stroke="#a9b0b5" stroke-width="2.1"/><path d="M5.6 7.6L8.3 3.4" stroke="#2b2d30" stroke-width="2.6"/><path d="M5.6 7.8L8.2 3.6" stroke="#a9b0b5" stroke-width="1.4"/></svg>
<div class="t" style="left:177.5px;top:653.9px;font-size:11px;color:#c8c8c8;transform:scaleX(0.804);">Profiler</div>
<svg style="left:222.5px;top:658.1px" width="10" height="8" viewBox="0 0 10 8"><path d="M0 1H10M0 4H7M0 7H9" stroke="#a9b0b5" stroke-width="1.5"/></svg>
<div class="t" style="left:236.5px;top:653.9px;font-size:11px;color:#c8c8c8;transform:scaleX(0.802);">Logcat</div>
<svg style="left:280px;top:655.9px" width="11.5" height="11" viewBox="0 0 11.5 11"><path d="M2.8 0.6H8.7L11 3.6L5.75 10.4L0.5 3.6Z M0.5 3.6H11M4 3.6L5.75 10.4L7.5 3.6M2.8 .6L4 3.6L5.75 .6L7.5 3.6L8.7 .6" fill="none" stroke="#b5babd" stroke-width=".9"/></svg>
<div class="t" style="left:294.5px;top:653.9px;font-size:11px;color:#c8c8c8;transform:scaleX(0.792);">App Quality Insights</div>
<svg style="left:392.5px;top:657.4px" width="8.5" height="9" viewBox="0 0 8.5 9"><rect x="0" y="0" width="8.5" height="9" rx="1.3" fill="#a38c84"/><rect x="1.6" y="5" width="5.3" height="2.4" fill="#6a5a55"/></svg>
<div class="t" style="left:406.5px;top:653.9px;font-size:11px;color:#c8c8c8;transform:scaleX(0.756);">Build</div>
<svg style="left:440.5px;top:657.4px" width="9" height="9" viewBox="0 0 9 9"><rect x="0.6" y="0.6" width="7.8" height="7.8" rx="1" fill="none" stroke="#b08060" stroke-width="1.2"/><rect x="2.4" y="2.4" width="4.2" height="4.2" fill="#b08060"/></svg>
<div class="t" style="left:454px;top:653.9px;font-size:11px;color:#c8c8c8;transform:scaleX(0.744);">TODO</div>
<svg style="left:496.5px;top:655.9px" width="10" height="11.5" viewBox="0 0 10 11.5"><ellipse cx="5" cy="2" rx="4.8" ry="2" fill="#b5babd"/><path d="M0.2 3.6Q5 6.6 9.8 3.6V5.8Q5 8.8 .2 5.8ZM0.2 7.2Q5 10.2 9.8 7.2V9.4Q5 12.4 .2 9.4Z" fill="#b5babd"/></svg>
<div class="t" style="left:512px;top:653.9px;font-size:11px;color:#c8c8c8;transform:scaleX(0.791);">SQL Android</div>
<svg style="left:579px;top:655.9px" width="10" height="11" viewBox="0 0 10 11"><circle cx="5" cy="4.4" r="3" fill="#c6cacd"/><rect x="3.3" y="7" width="3.4" height="3.5" fill="#a9b0b5"/><path d="M5 0V.9M.5 4.4H1.3M8.7 4.4H9.5M1.7 1.2L2.3 1.8M8.3 1.2L7.7 1.8" stroke="#c6cacd" stroke-width=".8"/></svg>
<div class="t" style="left:593.7px;top:653.9px;font-size:11px;color:#c8c8c8;transform:scaleX(0.781);">Problems</div>
<svg style="left:647px;top:657.4px" width="10" height="9" viewBox="0 0 10 9"><rect x="0" y="0" width="10" height="9" rx="1" fill="#b064b8"/><path d="M1.8 2.3L4 4.3L1.8 6.3M5 6.6H8" fill="none" stroke="#2b2d30" stroke-width="1"/></svg>
<div class="t" style="left:661.7px;top:653.9px;font-size:11px;color:#c8c8c8;transform:scaleX(0.794);">Terminal</div>
<svg style="left:712.6px;top:656.9px" width="10" height="10" viewBox="0 0 10 10"><path d="M5 0L6 1.4L7.8 .9L8.1 2.7L9.8 3.4L8.9 5L9.8 6.6L8.1 7.3L7.8 9.1L6 8.6L5 10L4 8.6L2.2 9.1L1.9 7.3L.2 6.6L1.1 5L.2 3.4L1.9 2.7L2.2 .9L4 1.4Z" fill="#5fb04b"/><circle cx="5" cy="5" r="1.7" fill="#2b2d30"/></svg>
<div class="t" style="left:725.7px;top:653.9px;font-size:11px;color:#c8c8c8;transform:scaleX(0.735);">Services</div>
<svg style="left:775.3px;top:656.4px" width="9.5" height="11" viewBox="0 0 9.5 11"><rect x="1.6" y="0" width="6.3" height="11" rx="1.2" fill="#b5babd"/><path d="M0 3H9.5M0 5.5H9.5M0 8H9.5" stroke="#b5babd" stroke-width="1"/><rect x="3.2" y="4.2" width="3.1" height="2.6" fill="#55595c"/></svg>
<div class="t" style="left:789px;top:653.9px;font-size:11px;color:#c8c8c8;transform:scaleX(0.797);">App Inspection</div>
<svg style="left:1171px;top:655.9px" width="11" height="11" viewBox="0 0 11 11"><path d="M1.5 6.5H0.5V0.5H8.5V1.5" fill="none" stroke="#b5babd" stroke-width="1"/><rect x="2.5" y="2.5" width="7" height="5.5" fill="none" stroke="#b5babd" stroke-width="1"/><circle cx="7" cy="7.2" r="1.9" fill="#2b2d30" stroke="#b5babd" stroke-width=".9"/><path d="M8.4 8.6L10.5 10.7" stroke="#b5babd" stroke-width="1.1"/></svg>
<div class="t" style="left:1185.8px;top:653.9px;font-size:11px;color:#c8c8c8;transform:scaleX(0.781);">Layout Inspector</div>
<svg style="left:2.5px;top:673.8px" width="10" height="11" viewBox="0 0 10 11"><path d="M5 0.3L9.7 3.6L5 6.9L0.3 3.6Z" fill="#e4e4e4"/><path d="M0.6 6.2L5 9.3L9.4 6.2" fill="none" stroke="#e4e4e4" stroke-width="1.3"/></svg>
<div class="t" style="left:19.5px;top:671.3px;font-size:11px;color:#b8b8b8;transform:scaleX(0.890);">Launch succeeded (a minute ago)</div>
<div class="t" style="left:1103.3px;top:671.3px;font-size:11px;color:#a8abae;transform:scaleX(0.814);">88:23</div>
<div class="t" style="left:1135.8px;top:671.3px;font-size:11px;color:#a8abae;transform:scaleX(0.795);">LF</div>
<div class="t" style="left:1155.5px;top:671.3px;font-size:11px;color:#a8abae;transform:scaleX(0.850);">UTF-8</div>
<div class="t" style="left:1191.5px;top:671.3px;font-size:11px;color:#a8abae;transform:scaleX(0.863);">4 spaces</div>
<svg style="left:1238.5px;top:674.3px" width="11" height="10" viewBox="0 0 11 10"><rect x="3" y="4.5" width="7.5" height="5.5" fill="#9ab4c8"/><path d="M1 5V3Q1 .7 3.2 .7Q5.4 .7 5.4 3V4.5" fill="none" stroke="#c8d4dc" stroke-width="1.2"/><rect x="6" y="6.3" width="1.6" height="2" fill="#3592e0"/></svg>
<svg style="left:1260px;top:674.5px" width="11" height="10" viewBox="0 0 11 10"><path d="M0.5 0H10.5V7.2H4L1.5 9.6V7.2H0.5Z" fill="#d8d8d8"/><path d="M5.5 1.4V4.3M5.5 5.2V6.2" stroke="#2b2d30" stroke-width="1.2"/></svg>
<div style="position:absolute;left:0px;top:156.5px;width:14px;height:57px;background:#3c3e42;"></div>
<div class="vt" style="left:0.20000000000000018px;top:132.3px;color:#c4c4c4;transform:rotate(-90deg) scaleX(0.868)">Resource Manager</div>
<svg style="left:2px;top:135.5px" width="10.5" height="10.5" viewBox="0 0 10.5 10.5"><path d="M5.2 0.3L7.6 4.3H2.8Z" fill="#9aa0a4"/><rect x="0.5" y="5.8" width="4" height="4" fill="#9aa0a4"/><circle cx="8" cy="7.8" r="2.2" fill="#9aa0a4"/></svg>
<div class="vt" style="left:0.20000000000000018px;top:191px;color:#e0e0e0;transform:rotate(-90deg) scaleX(0.867)">Project</div>
<svg style="left:2px;top:194.5px" width="10" height="10" viewBox="0 0 10 10"><rect x="0.6" y="1.6" width="8.8" height="6.8" fill="none" stroke="#2f9aa8" stroke-width="1.1"/><rect x="0.6" y="1.6" width="2" height="6.8" fill="#2f9aa8"/></svg>
<div class="vt" style="left:0.20000000000000018px;top:476px;color:#c4c4c4;transform:rotate(-90deg) scaleX(0.840)">Bookmarks</div>
<svg style="left:3px;top:480px" width="8" height="9.5" viewBox="0 0 8 9.5"><path d="M0 0H8V9.5L4 7L0 9.5Z" fill="#3fb5a8"/></svg>
<div class="vt" style="left:0.20000000000000018px;top:560.8px;color:#c4c4c4;transform:rotate(-90deg) scaleX(0.860)">Build Variants</div>
<svg style="left:2.5px;top:565px" width="9.5" height="8.5" viewBox="0 0 9.5 8.5"><path d="M0.5 8.5Q0.5 3.2 4.75 3.2Q9 3.2 9 8.5Z" fill="#b5babd"/><path d="M1.5 0.5L3.3 3.6M8 0.5L6.2 3.6" stroke="#b5babd" stroke-width=".9"/></svg>
<div class="vt" style="left:0.20000000000000018px;top:627px;color:#c4c4c4;transform:rotate(-90deg) scaleX(0.838)">Structure</div>
<svg style="left:2.5px;top:631px" width="9.5" height="10.5" viewBox="0 0 9.5 10.5"><rect x="0" y="0" width="9.5" height="4.6" fill="#e0a918"/><rect x="0" y="5.9" width="9.5" height="4.6" fill="#e0a918"/><rect x="1.4" y="1.5" width="3" height="1.6" fill="#2b2d30"/><rect x="1.4" y="7.4" width="3" height="1.6" fill="#2b2d30"/></svg>
<div style="position:absolute;left:1261px;top:443px;width:19px;height:96px;background:#3e4143;"></div>
<svg style="left:1264.8px;top:56.8px" width="13" height="10" viewBox="0 0 13 10"><path d="M0.5 9.5V5.5Q0.5 2 4 2H7.5Q8.5 0 10.5 0.3Q12.8 0.8 12.5 3.2Q12.3 4.2 11 4.2Q10.3 4.2 10 3.6Q9.6 4.5 9.8 5.5V9.5H7.6V7H6.2V9.5H3.9V7H2.7V9.5Z" fill="#24a8d8"/></svg>
<div class="vt" style="left:1277.3px;top:70px;color:#c4c4c4;transform:rotate(90deg) scaleX(0.880)">Gradle</div>
<svg style="left:1264px;top:114.5px" width="11" height="10.5" viewBox="0 0 11 10.5"><rect x="0.6" y="0.6" width="8" height="6.5" fill="none" stroke="#b5babd" stroke-width="1.1"/><rect x="5.6" y="3.6" width="4.8" height="6.3" rx=".8" fill="#2b2d30" stroke="#b5babd" stroke-width="1.1"/></svg>
<div class="vt" style="left:1277.3px;top:129px;color:#c4c4c4;transform:rotate(90deg) scaleX(0.862)">Device Manager</div>
<svg style="left:1265.5px;top:265.5px" width="10" height="10" viewBox="0 0 10 10"><path d="M1 7.5Q2 6.5 2 4Q2 1.2 5 1.2Q8 1.2 8 4Q8 6.5 9 7.5Z" fill="#5a8de0"/><circle cx="5" cy="8.6" r="1.1" fill="#5a8de0"/><circle cx="8" cy="1.8" r="1.6" fill="#5a8de0"/></svg>
<div class="vt" style="left:1277.3px;top:279.4px;color:#c4c4c4;transform:rotate(90deg) scaleX(0.885)">Notifications</div>
<div style="position:absolute;left:1264.2px;top:348px;width:11.8px;height:11.8px;background:#e01010;"></div>
<svg style="left:1264.2px;top:348px" width="11.8" height="11.8" viewBox="0 0 12 12"><rect x="3" y="2" width="6" height="8" rx="2.6" fill="none" stroke="#fff" stroke-width="1.4"/></svg>
<div class="vt" style="left:1277.3px;top:363.2px;color:#c4c4c4;transform:rotate(90deg) scaleX(0.856)">Schema  Explorer</div>
<svg style="left:1264.5px;top:453.5px" width="11" height="10.5" viewBox="0 0 11 10.5"><rect x="0.6" y="0.6" width="6.3" height="9" rx="1" fill="none" stroke="#b8bcc0" stroke-width="1.1"/><rect x="5.5" y="5.5" width="4.5" height="4.5" fill="#8c5fb5"/><rect x="7" y="1" width="3" height="3" fill="#2fe05a"/></svg>
<div class="vt" style="left:1277.3px;top:467.6px;color:#e0e0e0;transform:rotate(90deg) scaleX(0.825)">Running Devices</div>
<svg style="left:1265px;top:551px" width="9" height="10.5" viewBox="0 0 9 10.5"><rect x="0.6" y="0.6" width="7.8" height="9.3" rx="1" fill="none" stroke="#b8bcc0" stroke-width="1.2"/><rect x="0.6" y="7.4" width="7.8" height="2.5" fill="#b8bcc0"/></svg>
<div class="vt" style="left:1277.3px;top:565px;color:#c4c4c4;transform:rotate(90deg) scaleX(0.849)">Device File Explorer</div>
</div>
</body></html>
